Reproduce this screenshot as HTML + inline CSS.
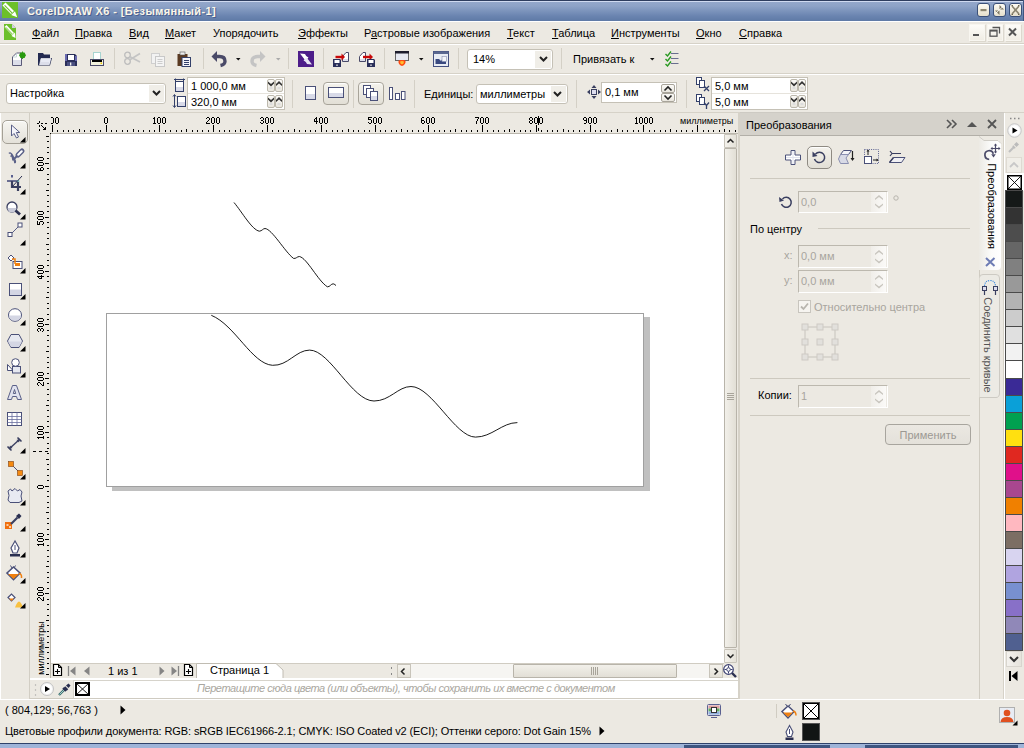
<!DOCTYPE html>
<html><head><meta charset="utf-8">
<style>
*{margin:0;padding:0;box-sizing:border-box}
html,body{width:1024px;height:748px;overflow:hidden;background:#ECE9E2;font-family:"Liberation Sans",sans-serif;font-size:11px;color:#000;position:relative}
.a{position:absolute}
.t{position:absolute;white-space:nowrap;line-height:13px}
svg{position:absolute;overflow:visible}
.u{text-decoration:underline;text-underline-offset:1px}
</style></head><body>
<div class="a" style="left:0px;top:0px;width:1024px;height:22px;background:linear-gradient(#95a8cb,#8ea3c7 25%,#6a84b0 75%,#5f7aa6);border-top:1px solid #2e3d5e;border-bottom:1px solid #3f5580"></div>
<div class="a" style="left:0px;top:1px;width:1024px;height:1px;background:#d0daf0"></div>
<div class="a" style="left:0px;top:21px;width:1024px;height:1px;background:#fff"></div>
<div class="a" style="left:1023px;top:0px;width:1px;height:21px;background:#3f5580"></div>
<svg style="left:2px;top:2px;" width="16" height="16" viewBox="0 0 16 16"><rect x="0" y="0" width="16" height="16" fill="#6cc02a"/><path d="M0.5 3.5 L3.5 0.5 L12 9 L9 12 Z" fill="#fff"/><path d="M2.6 3.4 L10 10.8" stroke="#6cc02a" stroke-width="1.1"/><path d="M9.2 13 L13 9.2 L15.2 15.2 Z" fill="#fff"/></svg>
<div class="t" style="left:27px;top:4.5px;font-weight:bold;font-size:11px;color:#fbf6e8;letter-spacing:0.38px;text-shadow:1px 1px 0 #4a6090">CorelDRAW X6 - [Безымянный-1]</div>
<div class="a" style="left:977px;top:3px;width:13px;height:14px;background:linear-gradient(#fdfbf3,#e6e0cc);border:1px solid #3b5078;border-radius:3px"></div>
<div class="a" style="left:993px;top:3px;width:13px;height:14px;background:linear-gradient(#fdfbf3,#e6e0cc);border:1px solid #3b5078;border-radius:3px"></div>
<div class="a" style="left:1009px;top:3px;width:13px;height:14px;background:linear-gradient(#fdfbf3,#e6e0cc);border:1px solid #3b5078;border-radius:3px"></div>
<svg style="left:977px;top:3px;" width="13" height="14" viewBox="0 0 13 14"><rect x="3.5" y="6" width="6" height="2.2" fill="#8c8670"/></svg>
<svg style="left:993px;top:3px;" width="13" height="14" viewBox="0 0 13 14"><path d="M6.5 2 L11 6.5 H6.5 Z" fill="#7c7660"/><path d="M6.5 12 L2 7.5 H6.5 Z" fill="#7c7660"/><path d="M2.5 10.5 L10.5 3" stroke="#fff" stroke-width="0.9"/></svg>
<svg style="left:1009px;top:3px;" width="13" height="14" viewBox="0 0 13 14"><path d="M3 3 L10 11 M10 3 L3 11" stroke="#8a8470" stroke-width="1.6"/><circle cx="6.5" cy="7" r="1.3" fill="#8a8470"/><path d="M2.5 2.5 h1.5 M9 2.5 h1.5 M2.5 11.5 h1.5 M9 11.5 h1.5" stroke="#6c6650" stroke-width="1.2"/></svg>
<div class="a" style="left:0px;top:22px;width:1024px;height:21px;background:#ECE9E2"></div>
<div class="a" style="left:0px;top:43px;width:1024px;height:1px;background:#d6d2c8"></div>
<div class="a" style="left:0px;top:44px;width:1024px;height:1px;background:#fff"></div>
<svg style="left:4px;top:24px;" width="12" height="16" viewBox="0 0 12 16"><path d="M0 0 H8 L12 4 V16 H0 Z" fill="#6cc02a"/><path d="M8 0 L12 4 H8 Z" fill="#d4cce4"/><path d="M0.5 3 L2.5 1 L10 9 L8 11 Z" fill="#fff"/><path d="M1.8 3.3 L8.3 10" stroke="#6cc02a" stroke-width="1"/><path d="M7.5 12 L11 8.5 L11.5 14 Z" fill="#fff"/></svg>
<div class="t" style="left:32px;top:27px;"><span class="u">Ф</span>айл</div>
<div class="t" style="left:75px;top:27px;"><span class="u">П</span>равка</div>
<div class="t" style="left:129px;top:27px;"><span class="u">В</span>ид</div>
<div class="t" style="left:165px;top:27px;"><span class="u">М</span>акет</div>
<div class="t" style="left:213px;top:27px;">Упорядочить</div>
<div class="t" style="left:298px;top:27px;"><span class="u">Э</span>ффекты</div>
<div class="t" style="left:364px;top:27px;">Р<span class="u">а</span>стровые изображения</div>
<div class="t" style="left:507px;top:27px;"><span class="u">Т</span>екст</div>
<div class="t" style="left:552px;top:27px;"><span class="u">Т</span>аблица</div>
<div class="t" style="left:611px;top:27px;"><span class="u">И</span>нструменты</div>
<div class="t" style="left:696px;top:27px;"><span class="u">О</span>кно</div>
<div class="t" style="left:739px;top:27px;"><span class="u">С</span>правка</div>
<div class="a" style="left:969px;top:24px;width:16px;height:17px;background:linear-gradient(#fdfcf8,#f0ede4);border:1px solid #f8f6f0;box-shadow:1px 1px 0 #dcd8ce"></div>
<div class="a" style="left:987px;top:24px;width:16px;height:17px;background:linear-gradient(#fdfcf8,#f0ede4);border:1px solid #f8f6f0;box-shadow:1px 1px 0 #dcd8ce"></div>
<div class="a" style="left:1005px;top:24px;width:16px;height:17px;background:linear-gradient(#fdfcf8,#f0ede4);border:1px solid #f8f6f0;box-shadow:1px 1px 0 #dcd8ce"></div>
<svg style="left:969px;top:24px;" width="16" height="17" viewBox="0 0 16 17"><rect x="4" y="10" width="6" height="2" fill="#555"/></svg>
<svg style="left:987px;top:24px;" width="16" height="17" viewBox="0 0 16 17"><path d="M5.5 3.5 H12.5 V9.5" stroke="#555" fill="none" stroke-width="1.3"/><rect x="3" y="6.2" width="7" height="6" stroke="#555" fill="none" stroke-width="1.3"/><rect x="3" y="6" width="7" height="1.6" fill="#555"/></svg>
<svg style="left:1005px;top:24px;" width="16" height="17" viewBox="0 0 16 17"><path d="M4 4.5 L11 11.5 M11 4.5 L4 11.5" stroke="#555" stroke-width="2"/></svg>
<div class="a" style="left:0px;top:73px;width:1024px;height:1px;background:#d6d2c8"></div>
<div class="a" style="left:0px;top:74px;width:1024px;height:1px;background:#fff"></div>
<div class="a" style="left:114px;top:48px;width:1px;height:21px;background:#d4d0c6"></div>
<div class="a" style="left:203px;top:48px;width:1px;height:21px;background:#d4d0c6"></div>
<div class="a" style="left:288px;top:48px;width:1px;height:21px;background:#d4d0c6"></div>
<div class="a" style="left:323px;top:48px;width:1px;height:21px;background:#d4d0c6"></div>
<div class="a" style="left:384px;top:48px;width:1px;height:21px;background:#d4d0c6"></div>
<div class="a" style="left:458px;top:48px;width:1px;height:21px;background:#d4d0c6"></div>
<div class="a" style="left:561px;top:48px;width:1px;height:21px;background:#d4d0c6"></div>
<svg style="left:12px;top:52px;" width="14" height="14" viewBox="0 0 14 14"><path d="M0.5 13.5 V5 L4.5 1 H9.5 V13.5 Z" fill="#fff" stroke="#5a5a78"/><rect x="1" y="8" width="8" height="5" fill="#dcdeea"/><path d="M1 5 H4.5 V1.5" fill="none" stroke="#c8dcdc"/><circle cx="10.5" cy="3.2" r="3" fill="#2a9a10"/><path d="M10.5 -0.5 V7 M7 3.2 H14 M8 0.8 L13 5.6 M13 0.8 L8 5.6" stroke="#2a9a10" stroke-width="0.9"/></svg>
<svg style="left:38px;top:53px;" width="14" height="13" viewBox="0 0 14 13"><path d="M0 0 H5 L6 1.5 H12 V9 H0 Z" fill="#232a50"/><path d="M0 12.5 V4 H12 V5 H14 L12 12.5 Z" fill="#232a50"/><path d="M1.5 12 L3 5.5 H13.2 L11.5 12 Z" fill="#e8eaf4"/><path d="M1.5 12 L3 5.5 H13" fill="none" stroke="#fff" stroke-width="0.6"/><rect x="2" y="9" width="9" height="3" fill="#dcdeea"/></svg>
<svg style="left:65px;top:54px;" width="12" height="12" viewBox="0 0 12 12"><path d="M0 0 H10 L12 2 V12 H0 Z" fill="#2a2f5a"/><rect x="0" y="0" width="2" height="7" fill="#6a6ab0"/><rect x="10" y="2" width="2" height="5" fill="#6a6ab0"/><rect x="3" y="1" width="6" height="5" fill="#fff"/><rect x="2" y="8" width="8" height="4" fill="#4a4f80"/><rect x="5" y="8.5" width="1.3" height="3" fill="#f0f0f0"/></svg>
<svg style="left:90px;top:52px;" width="14" height="14" viewBox="0 0 14 14"><rect x="3.5" y="0.5" width="7" height="8" fill="#fff" stroke="#a8d4d0"/><rect x="0.5" y="7.5" width="13" height="6" fill="#f2f2dc" stroke="#4a4a68"/><rect x="2" y="8" width="10" height="2" fill="#000"/><rect x="10.5" y="10.5" width="1.5" height="1.5" fill="#f0c800"/></svg>
<svg style="left:124px;top:51px;" width="17" height="14" viewBox="0 0 17 14"><circle cx="3.5" cy="4" r="2.8" fill="none" stroke="#bdbdbd" stroke-width="1.3"/><circle cx="3.5" cy="10.5" r="2.8" fill="none" stroke="#bdbdbd" stroke-width="1.3"/><path d="M5.5 5.5 L16 11 M5.5 9 L16 2.5" stroke="#c4c4c4" stroke-width="1.6"/></svg>
<svg style="left:151px;top:53px;" width="14" height="14" viewBox="0 0 14 14"><rect x="0.5" y="0.5" width="8" height="10" fill="#f2f2f2" stroke="#cfcfcf"/><rect x="4.5" y="3.5" width="9" height="10" fill="#f4f4f4" stroke="#c8c8c8"/><path d="M6.5 6.5 H11.5 M6.5 8.5 H11.5 M6.5 10.5 H11.5" stroke="#ccc"/></svg>
<svg style="left:177px;top:52px;" width="14" height="15" viewBox="0 0 14 15"><rect x="0.5" y="2" width="10" height="12" fill="#5a3a22"/><rect x="3" y="0" width="5" height="3" fill="#eee" stroke="#555" stroke-width="0.6"/><rect x="5" y="5.5" width="8.5" height="9" fill="#f4f4fa" stroke="#33406a"/><path d="M7 8.5 H12 M7 10.5 H12 M7 12.5 H12" stroke="#33406a"/></svg>
<svg style="left:211px;top:50px;" width="17" height="17" viewBox="0 0 17 17"><path d="M5 6.5 H8.5 Q14 6.5 14 11.2 Q14 14.5 9.5 15.5" fill="none" stroke="#4a4a68" stroke-width="3.4"/><path d="M0.5 6.5 L6 1 V12 Z" fill="#4a4a68"/></svg>
<svg style="left:236px;top:58px;" width="5" height="3" viewBox="0 0 5 3"><path d="M0 0 H4.5 L2.25 2.5 Z" fill="#111"/></svg>
<svg style="left:249px;top:50px;" width="17" height="17" viewBox="0 0 17 17"><path d="M12 6.5 H8.5 Q3 6.5 3 11.2 Q3 14.5 7.5 15.5" fill="none" stroke="#c4c4c4" stroke-width="3.4"/><path d="M16.5 6.5 L11 1 V12 Z" fill="#c4c4c4"/></svg>
<svg style="left:276px;top:58px;" width="5" height="3" viewBox="0 0 5 3"><path d="M0 0 H4.5 L2.25 2.5 Z" fill="#aaa"/></svg>
<svg style="left:298px;top:51px;" width="16" height="16" viewBox="0 0 16 16"><rect x="0" y="0" width="16" height="16" fill="#4d1d8a"/><path d="M2 2.5 L7 3 L9.5 7.5 L7 9 Z" fill="#fff"/><path d="M4 2.8 Q8 6 7.5 9.5 L10.5 6.5 Z" fill="#fff"/><path d="M14 13.5 L9 13 L6.5 8.5 L9 7 Z" fill="#e8e4f4"/><path d="M12 13.2 Q8 10 8.5 6.5 L5.5 9.5 Z" fill="#e8e4f4"/></svg>
<svg style="left:332px;top:51px;" width="17" height="17" viewBox="0 0 17 17"><path d="M10.5 5.5 L14 1.5 H16.5 V10.5 H10.5 Z" fill="#fff" stroke="#4a4a68"/><rect x="11" y="8" width="5" height="2" fill="#dcdeea"/><path d="M3.5 6 H10" stroke="#c80808" stroke-width="2.4"/><path d="M9.5 2.5 L13 6 L9.5 9.5 Z" fill="#c80808"/><path d="M1 8 H8 L9 9 V16 H1 Z" fill="#2a2f5a"/><rect x="2.5" y="9" width="5" height="3" fill="#fff"/><rect x="4.3" y="13.5" width="1.4" height="1.4" fill="#eee"/></svg>
<svg style="left:359px;top:51px;" width="17" height="17" viewBox="0 0 17 17"><path d="M0.5 5.5 L4 1.5 H6.5 V10.5 H0.5 Z" fill="#fff" stroke="#4a4a68"/><rect x="1" y="8" width="5" height="2" fill="#dcdeea"/><path d="M4 6 H11" stroke="#c80808" stroke-width="2.4"/><path d="M10.5 2.5 L14 6 L10.5 9.5 Z" fill="#c80808"/><path d="M8 8 H15 L16 9 V16 H8 Z" fill="#2a2f5a"/><rect x="9.5" y="9" width="5" height="3" fill="#fff"/><rect x="11.3" y="13.5" width="1.4" height="1.4" fill="#eee"/></svg>
<svg style="left:395px;top:51px;" width="14" height="17" viewBox="0 0 14 17"><rect x="0.5" y="0.5" width="13" height="9" fill="#e6e8f0" stroke="#666"/><rect x="0" y="0" width="14" height="2.5" fill="#1c1c2c"/><path d="M3.5 10 Q4 8.5 7 9 Q10 8.5 10.5 10 Q11 13.5 7 15 Q3 13.5 3.5 10 Z" fill="#ff4a10"/><path d="M5 10.5 Q7 9.5 9 10.5 Q9 12.8 7 13.5 Q5 12.8 5 10.5 Z" fill="#ffc030"/></svg>
<svg style="left:419px;top:58px;" width="5" height="3" viewBox="0 0 5 3"><path d="M0 0 H4.5 L2.25 2.5 Z" fill="#111"/></svg>
<svg style="left:433px;top:51px;" width="16" height="16" viewBox="0 0 16 16"><rect x="0.5" y="0.5" width="15" height="15" fill="#e8ecf4" stroke="#445080"/><rect x="0.5" y="0.5" width="15" height="2.5" fill="#5a6890"/><path d="M2.5 13 V8 H6 L8 10 L10.5 6 H13 V13 Z" fill="#3a4a80"/><rect x="9" y="5.5" width="4.5" height="5" fill="#f4f6fa" stroke="#8890b0" stroke-width="0.6"/></svg>
<div class="a" style="left:467px;top:49px;width:86px;height:21px;background:#fff;border:1px solid #c5c1b6;border-radius:3px"></div>
<div class="t" style="left:473px;top:53px;">14%</div>
<div class="a" style="left:535px;top:51px;width:16px;height:17px;background:#f0eee8"></div>
<svg style="left:539px;top:56px;" width="9" height="6" viewBox="0 0 9 6"><path d="M1 1 L4.5 4.5 L8 1" fill="none" stroke="#222" stroke-width="2"/></svg>
<div class="t" style="left:573px;top:53px;">Привязать к</div>
<svg style="left:650px;top:58px;" width="5" height="3" viewBox="0 0 5 3"><path d="M0 0 H4.5 L2.25 2.5 Z" fill="#111"/></svg>
<svg style="left:665px;top:51px;" width="14" height="16" viewBox="0 0 14 16"><path d="M6 2.5 H13.5 M6 7.5 H13.5 M6 12.5 H13.5" stroke="#6a6e90" stroke-width="1.2"/><path d="M0.5 3 L2.5 5 L6 0.5 M0.5 8 L2.5 10 L6 5.5 M0.5 13 L2.5 15 L6 10.5" fill="none" stroke="#2a9a22" stroke-width="1.4"/></svg>
<div class="a" style="left:0px;top:112px;width:1024px;height:1px;background:#d6d2c8"></div>
<div class="a" style="left:6px;top:83px;width:160px;height:21px;background:#fff;border:1px solid #c5c1b6;border-radius:3px"></div>
<div class="t" style="left:10px;top:87px;">Настройка</div>
<div class="a" style="left:149px;top:85px;width:15px;height:17px;background:#f0eee8"></div>
<svg style="left:152px;top:90px;" width="9" height="6" viewBox="0 0 9 6"><path d="M1 1 L4.5 4.5 L8 1" fill="none" stroke="#222" stroke-width="2"/></svg>
<svg style="left:173px;top:78px;" width="13" height="15" viewBox="0 0 13 15"><path d="M2.5 0.5 V3 M10.5 0.5 V3 M1 1.5 H12" stroke="#33406a"/><rect x="2.5" y="3.5" width="8" height="10" fill="#fff" stroke="#33406a"/><rect x="3" y="9" width="7" height="4" fill="#d8dae8"/></svg>
<svg style="left:173px;top:94px;" width="13" height="15" viewBox="0 0 13 15"><path d="M1.5 1 V13 M0 2.5 L1.5 0.5 L3 2.5 M0 11.5 L1.5 13.5 L3 11.5" stroke="#33406a" fill="none"/><rect x="4.5" y="2.5" width="8" height="10" fill="#fff" stroke="#33406a"/><rect x="5" y="8" width="7" height="4" fill="#d8dae8"/></svg>
<div class="a" style="left:187px;top:77px;width:98px;height:33px;background:#fff;border:1px solid #c5c1b6"></div>
<div class="a" style="left:188px;top:93px;width:96px;height:1px;background:#e6e3dc"></div>
<div class="t" style="left:191px;top:80px;">1 000,0 мм</div>
<div class="a" style="left:267px;top:79px;width:8px;height:13px;background:linear-gradient(#fbfaf7,#e9e6de);border:1px solid #bcb8ac;border-radius:2px"></div>
<svg style="left:268px;top:81px;" width="6" height="8" viewBox="0 0 6 8"><path d="M0 0.5 L3 3 L6 0.5 V2.5 L3 5.5 L0 2.5 Z" fill="#333"/><rect x="1.5" y="6" width="3" height="2" fill="#ddd"/></svg>
<div class="a" style="left:275px;top:79px;width:8px;height:13px;background:linear-gradient(#fbfaf7,#e9e6de);border:1px solid #bcb8ac;border-radius:2px"></div>
<svg style="left:276px;top:81px;" width="6" height="8" viewBox="0 0 6 8"><path d="M0 5 L3 2.5 L6 5 V3 L3 0 L0 3 Z" fill="#333"/><rect x="1.5" y="6" width="3" height="2" fill="#ddd"/></svg>
<div class="t" style="left:191px;top:96px;">320,0 мм</div>
<div class="a" style="left:267px;top:95px;width:8px;height:13px;background:linear-gradient(#fbfaf7,#e9e6de);border:1px solid #bcb8ac;border-radius:2px"></div>
<svg style="left:268px;top:97px;" width="6" height="8" viewBox="0 0 6 8"><path d="M0 0.5 L3 3 L6 0.5 V2.5 L3 5.5 L0 2.5 Z" fill="#333"/><rect x="1.5" y="6" width="3" height="2" fill="#ddd"/></svg>
<div class="a" style="left:275px;top:95px;width:8px;height:13px;background:linear-gradient(#fbfaf7,#e9e6de);border:1px solid #bcb8ac;border-radius:2px"></div>
<svg style="left:276px;top:97px;" width="6" height="8" viewBox="0 0 6 8"><path d="M0 5 L3 2.5 L6 5 V3 L3 0 L0 3 Z" fill="#333"/><rect x="1.5" y="6" width="3" height="2" fill="#ddd"/></svg>
<div class="a" style="left:292px;top:80px;width:1px;height:28px;background:#d4d0c6"></div>
<svg style="left:305px;top:86px;" width="11" height="14" viewBox="0 0 11 14"><rect x="0.5" y="0.5" width="10" height="13" fill="#fff" stroke="#4a5078"/><rect x="1" y="8" width="9" height="5" fill="#d8dae8"/></svg>
<div class="a" style="left:323px;top:82px;width:26px;height:23px;background:linear-gradient(#f4f2ec,#e2dfd6);border:1px solid #a8a49a;border-radius:4px;box-shadow:inset 0 1px 1px #fff"></div>
<svg style="left:328px;top:86px;" width="17" height="14" viewBox="0 0 17 14"><rect x="0.5" y="1.5" width="15" height="10" fill="#fff" stroke="#4a5078"/><rect x="1" y="7" width="14" height="4" fill="#d8dae8"/></svg>
<div class="a" style="left:353px;top:80px;width:1px;height:28px;background:#d4d0c6"></div>
<div class="a" style="left:358px;top:82px;width:26px;height:23px;background:linear-gradient(#f4f2ec,#e2dfd6);border:1px solid #a8a49a;border-radius:4px;box-shadow:inset 0 1px 1px #fff"></div>
<svg style="left:363px;top:85px;" width="16" height="16" viewBox="0 0 16 16"><rect x="0.5" y="0.5" width="7" height="9" fill="#fff" stroke="#4a5078"/><rect x="3.5" y="3.5" width="7" height="9" fill="#fff" stroke="#4a5078"/><rect x="7.5" y="6.5" width="7" height="9" fill="#fff" stroke="#4a5078"/><rect x="8" y="11" width="6" height="4" fill="#d8dae8"/></svg>
<svg style="left:389px;top:87px;" width="17" height="13" viewBox="0 0 17 13"><rect x="0.5" y="0.5" width="3" height="12" fill="#fff" stroke="#4a5078"/><rect x="6.5" y="6.5" width="4" height="6" fill="#fff" stroke="#4a5078"/><rect x="12.5" y="4.5" width="3.5" height="8" fill="#fff" stroke="#4a5078"/></svg>
<div class="a" style="left:414px;top:80px;width:1px;height:28px;background:#d4d0c6"></div>
<div class="t" style="left:424px;top:88px;">Единицы:</div>
<div class="a" style="left:476px;top:84px;width:92px;height:20px;background:#fff;border:1px solid #c5c1b6;border-radius:3px"></div>
<div class="t" style="left:480px;top:88px;">миллиметры</div>
<div class="a" style="left:551px;top:86px;width:15px;height:16px;background:#f0eee8"></div>
<svg style="left:553px;top:91px;" width="9" height="6" viewBox="0 0 9 6"><path d="M1 1 L4.5 4.5 L8 1" fill="none" stroke="#222" stroke-width="2"/></svg>
<div class="a" style="left:576px;top:80px;width:1px;height:28px;background:#d4d0c6"></div>
<svg style="left:587px;top:85px;" width="14" height="14" viewBox="0 0 14 14"><path d="M7 0 L9.5 3 H4.5 Z M7 14 L9.5 11 H4.5 Z M0 7 L3 4.5 V9.5 Z M14 7 L11 4.5 V9.5 Z" fill="#3a4060"/><rect x="4.5" y="4.5" width="5" height="5" fill="#dde" stroke="#3a4060"/></svg>
<div class="a" style="left:601px;top:82px;width:76px;height:21px;background:#fff;border:1px solid #c5c1b6"></div>
<div class="t" style="left:605px;top:86px;">0,1 мм</div>
<div class="a" style="left:661px;top:84px;width:14px;height:9px;background:linear-gradient(#fbfaf7,#e9e6de);border:1px solid #a8a49a;border-radius:2px"></div>
<div class="a" style="left:661px;top:93px;width:14px;height:9px;background:linear-gradient(#fbfaf7,#e9e6de);border:1px solid #a8a49a;border-radius:2px"></div>
<svg style="left:664px;top:86px;" width="8" height="5" viewBox="0 0 8 5"><path d="M0.5 4.5 L4 1 L7.5 4.5" fill="none" stroke="#222" stroke-width="1.6"/></svg>
<svg style="left:664px;top:95px;" width="8" height="5" viewBox="0 0 8 5"><path d="M0.5 0.5 L4 4 L7.5 0.5" fill="none" stroke="#222" stroke-width="1.6"/></svg>
<div class="a" style="left:686px;top:80px;width:1px;height:28px;background:#d4d0c6"></div>
<svg style="left:696px;top:77px;" width="14" height="15" viewBox="0 0 14 15"><rect x="0.5" y="0.5" width="5" height="7" fill="#fff" stroke="#33406a"/><rect x="3.5" y="3.5" width="5" height="7" fill="#fff" stroke="#33406a"/><path d="M8 9 L13 14 M13 9 L8 14" stroke="#33406a" stroke-width="1.3"/></svg>
<svg style="left:696px;top:94px;" width="14" height="15" viewBox="0 0 14 15"><rect x="0.5" y="0.5" width="5" height="7" fill="#fff" stroke="#33406a"/><rect x="3.5" y="3.5" width="5" height="7" fill="#fff" stroke="#33406a"/><path d="M8 8.5 L10.5 11.5 L13 8.5 M10.5 11.5 V15" fill="none" stroke="#33406a" stroke-width="1.3"/></svg>
<div class="a" style="left:711px;top:77px;width:97px;height:33px;background:#fff;border:1px solid #c5c1b6"></div>
<div class="a" style="left:712px;top:93px;width:95px;height:1px;background:#e6e3dc"></div>
<div class="t" style="left:715px;top:80px;">5,0 мм</div>
<div class="a" style="left:790px;top:79px;width:8px;height:13px;background:linear-gradient(#fbfaf7,#e9e6de);border:1px solid #bcb8ac;border-radius:2px"></div>
<svg style="left:791px;top:81px;" width="6" height="8" viewBox="0 0 6 8"><path d="M0 0.5 L3 3 L6 0.5 V2.5 L3 5.5 L0 2.5 Z" fill="#333"/><rect x="1.5" y="6" width="3" height="2" fill="#ddd"/></svg>
<div class="a" style="left:798px;top:79px;width:8px;height:13px;background:linear-gradient(#fbfaf7,#e9e6de);border:1px solid #bcb8ac;border-radius:2px"></div>
<svg style="left:799px;top:81px;" width="6" height="8" viewBox="0 0 6 8"><path d="M0 5 L3 2.5 L6 5 V3 L3 0 L0 3 Z" fill="#333"/><rect x="1.5" y="6" width="3" height="2" fill="#ddd"/></svg>
<div class="t" style="left:715px;top:96px;">5,0 мм</div>
<div class="a" style="left:790px;top:95px;width:8px;height:13px;background:linear-gradient(#fbfaf7,#e9e6de);border:1px solid #bcb8ac;border-radius:2px"></div>
<svg style="left:791px;top:97px;" width="6" height="8" viewBox="0 0 6 8"><path d="M0 0.5 L3 3 L6 0.5 V2.5 L3 5.5 L0 2.5 Z" fill="#333"/><rect x="1.5" y="6" width="3" height="2" fill="#ddd"/></svg>
<div class="a" style="left:798px;top:95px;width:8px;height:13px;background:linear-gradient(#fbfaf7,#e9e6de);border:1px solid #bcb8ac;border-radius:2px"></div>
<svg style="left:799px;top:97px;" width="6" height="8" viewBox="0 0 6 8"><path d="M0 5 L3 2.5 L6 5 V3 L3 0 L0 3 Z" fill="#333"/><rect x="1.5" y="6" width="3" height="2" fill="#ddd"/></svg>
<div class="a" style="left:0px;top:113px;width:1px;height:586px;background:#fff"></div>
<div class="a" style="left:29px;top:113px;width:1px;height:586px;background:#d2cec4"></div>
<div class="a" style="left:2px;top:120px;width:26px;height:24px;background:linear-gradient(#f6f5f1,#e4e1d9);border:1px solid #a4a096;border-radius:5px;box-shadow:inset 0 1px 1px #fff"></div>
<svg style="left:10px;top:124px;" width="11" height="15" viewBox="0 0 11 15"><path d="M1.5 1 V12 L4 9.5 L6.5 14 L8.5 13 L6.3 8.5 H9.8 Z" fill="#f4f4fa" stroke="#5a6088" stroke-width="1"/></svg>
<svg style="left:20px;top:137px;" width="6" height="6" viewBox="0 0 6 6"><path d="M5.5 0 V5.5 H0 Z" fill="#000"/></svg>
<svg style="left:7px;top:149px;" width="17" height="17" viewBox="0 0 17 17"><path d="M11 6 L15 2" stroke="#5a6088" stroke-width="5" stroke-linecap="round"/><path d="M11.3 5.7 L14.7 2.3" stroke="#fff" stroke-width="2.2" stroke-linecap="round"/><path d="M10 7 L7 10" stroke="#5a6088" stroke-width="2"/><path d="M2 4.5 Q3 3 4.5 5 L6.5 8 M3.5 7.5 Q4.5 6 6 8 L8 11 Q9 13 7.5 14 M5.5 10.5 Q7 9.5 8 11" fill="none" stroke="#5a6088" stroke-width="1.4"/><path d="M4.5 5 L6 11.5 M6 8 L8 14" fill="none" stroke="#5a6088" stroke-width="1.2"/></svg>
<svg style="left:20px;top:163px;" width="6" height="6" viewBox="0 0 6 6"><path d="M5.5 0 V5.5 H0 Z" fill="#000"/></svg>
<svg style="left:7px;top:175px;" width="16" height="16" viewBox="0 0 16 16"><path d="M5 0 V2.5" stroke="#5a6090" stroke-width="2"/><path d="M0 6 H10" stroke="#6a6e92" stroke-width="2"/><path d="M5 6 V12 H14" fill="none" stroke="#3a3f60" stroke-width="2.2"/><path d="M11 6 V16" stroke="#3a3f60" stroke-width="2.2"/><path d="M11 5 V7" stroke="#7ac0c0" stroke-width="2.2"/><path d="M5 12 L15 1" stroke="#2a2f50" stroke-width="1"/></svg>
<svg style="left:20px;top:189px;" width="6" height="6" viewBox="0 0 6 6"><path d="M5.5 0 V5.5 H0 Z" fill="#000"/></svg>
<svg style="left:6px;top:201px;" width="17" height="14" viewBox="0 0 17 14"><circle cx="6" cy="6" r="5" fill="#fff" stroke="#3a3f60" stroke-width="1.3"/><path d="M1.5 7 H10.5 A4.5 4.5 0 0 1 1.5 7 Z" fill="#c8cad8"/><path d="M9.5 9.5 L14 13.5" stroke="#2a2f50" stroke-width="2.8"/></svg>
<svg style="left:20px;top:214px;" width="6" height="6" viewBox="0 0 6 6"><path d="M5.5 0 V5.5 H0 Z" fill="#000"/></svg>
<svg style="left:7px;top:222px;" width="16" height="16" viewBox="0 0 16 16"><path d="M3.5 12.5 L12.5 3.5" stroke="#5a6088" stroke-width="1"/><rect x="1" y="10.5" width="4" height="4" fill="#fff" stroke="#4a5078"/><rect x="11" y="1" width="4" height="4" fill="#fff" stroke="#4a5078"/></svg>
<svg style="left:20px;top:240px;" width="6" height="6" viewBox="0 0 6 6"><path d="M5.5 0 V5.5 H0 Z" fill="#000"/></svg>
<svg style="left:7px;top:254px;" width="16" height="16" viewBox="0 0 16 16"><path d="M4 1 L7 4 L4 7 L1 4 Z" fill="#fff" stroke="#4a5078"/><rect x="6" y="7.5" width="9" height="7" fill="#fff" stroke="#4a5078"/><rect x="8" y="9" width="5" height="3" fill="#f08010"/><path d="M5 5 H8 V10" stroke="#f08010" stroke-width="1.5" fill="none"/></svg>
<svg style="left:20px;top:268px;" width="6" height="6" viewBox="0 0 6 6"><path d="M5.5 0 V5.5 H0 Z" fill="#000"/></svg>
<svg style="left:9px;top:283px;" width="13" height="13" viewBox="0 0 13 13"><rect x="0.5" y="0.5" width="12" height="12" fill="#fff" stroke="#4a5078"/><rect x="1" y="6.5" width="11" height="5.5" fill="#d4d6e4"/></svg>
<svg style="left:20px;top:294px;" width="6" height="6" viewBox="0 0 6 6"><path d="M5.5 0 V5.5 H0 Z" fill="#000"/></svg>
<svg style="left:8px;top:308px;" width="15" height="14" viewBox="0 0 15 14"><ellipse cx="7" cy="7" rx="6.5" ry="6.3" fill="#fff" stroke="#4a5078"/><path d="M0.8 7.5 H13.2 A6.3 6.2 0 0 1 0.8 7.5 Z" fill="#d4d6e4"/></svg>
<svg style="left:20px;top:320px;" width="6" height="6" viewBox="0 0 6 6"><path d="M5.5 0 V5.5 H0 Z" fill="#000"/></svg>
<svg style="left:7px;top:334px;" width="16" height="14" viewBox="0 0 16 14"><path d="M4 0.5 H12 L15.5 7 L12 13.5 H4 L0.5 7 Z" fill="#e6e8f0" stroke="#4a5078"/><path d="M1 7.5 H15 L12 13 H4 Z" fill="#d4d6e4"/></svg>
<svg style="left:20px;top:346px;" width="6" height="6" viewBox="0 0 6 6"><path d="M5.5 0 V5.5 H0 Z" fill="#000"/></svg>
<svg style="left:7px;top:358px;" width="16" height="16" viewBox="0 0 16 16"><path d="M0.5 6.5 L6 12.5 H0.5 Z" fill="#fff" stroke="#4a5078"/><rect x="5.5" y="8.5" width="8" height="6.5" fill="#e6e8f0" stroke="#4a5078"/><circle cx="8.5" cy="4.5" r="3.8" fill="#fff" stroke="#4a5078"/></svg>
<svg style="left:20px;top:372px;" width="6" height="6" viewBox="0 0 6 6"><path d="M5.5 0 V5.5 H0 Z" fill="#000"/></svg>
<svg style="left:7px;top:385px;" width="15" height="15" viewBox="0 0 15 15"><path d="M0.5 14.5 L5.5 0.5 H9.5 L14.5 14.5 H10.5 L9.5 11.5 H5.5 L4.5 14.5 Z M6.3 8.5 H8.7 L7.5 4.5 Z" fill="#e0e2ee" stroke="#5a6088" stroke-width="1"/></svg>
<svg style="left:7px;top:412px;" width="15" height="14" viewBox="0 0 15 14"><rect x="0.5" y="0.5" width="14" height="13" fill="#fff" stroke="#4a5078"/><path d="M0.5 4.5 H14.5 M0.5 7.5 H14.5 M0.5 10.5 H14.5 M5 0.5 V13.5 M10 0.5 V13.5" stroke="#6a70a0" stroke-width="0.8"/></svg>
<svg style="left:7px;top:437px;" width="15" height="14" viewBox="0 0 15 14"><path d="M2 12 L13 2" stroke="#3a3f60" stroke-width="1.4"/><path d="M0.5 9.5 L4.5 13.5 M10.5 0.5 L14.5 4.5" stroke="#3a3f60" stroke-width="1.6"/><path d="M2 12 L3 8.5 L5.5 11 Z M13 2 L9.5 3 L12 5.5 Z" fill="#3a3f60"/></svg>
<svg style="left:20px;top:448px;" width="6" height="6" viewBox="0 0 6 6"><path d="M5.5 0 V5.5 H0 Z" fill="#000"/></svg>
<svg style="left:8px;top:461px;" width="15" height="16" viewBox="0 0 15 16"><path d="M3 3 L12 12" stroke="#4a5078" stroke-width="1"/><rect x="0.5" y="0.5" width="5" height="5" fill="#f58a10" stroke="#804010" stroke-width="0.6"/><rect x="9.5" y="9.5" width="5" height="5" fill="#f58a10" stroke="#804010" stroke-width="0.6"/></svg>
<svg style="left:20px;top:474px;" width="6" height="6" viewBox="0 0 6 6"><path d="M5.5 0 V5.5 H0 Z" fill="#000"/></svg>
<svg style="left:7px;top:488px;" width="16" height="15" viewBox="0 0 16 15"><path d="M1 3 L3.5 1 L5 3 L8 0.5 L10.5 3 L13 1.5 L15 4 L14 8 L15 13 L12 14.5 H3 L1 12 L2 7.5 Z" fill="#e8eaf2" stroke="#4a5078" stroke-width="1"/></svg>
<svg style="left:20px;top:500px;" width="6" height="6" viewBox="0 0 6 6"><path d="M5.5 0 V5.5 H0 Z" fill="#000"/></svg>
<svg style="left:5px;top:513px;" width="17" height="17" viewBox="0 0 17 17"><rect x="0" y="9" width="7" height="7" fill="#f07010"/><rect x="1.5" y="11" width="2" height="2" fill="#ffd0a0"/><rect x="4" y="13" width="2" height="2" fill="#ffd0a0"/><path d="M6 11 L12.5 4.5" stroke="#3a3f60" stroke-width="2.2"/><path d="M11 3 L14 0.5 L16.5 3 L14 6 Z" fill="#2a2f50"/></svg>
<svg style="left:20px;top:526px;" width="6" height="6" viewBox="0 0 6 6"><path d="M5.5 0 V5.5 H0 Z" fill="#000"/></svg>
<svg style="left:9px;top:540px;" width="12" height="17" viewBox="0 0 12 17"><path d="M6 1 L2 8 L4 13 H8 L10 8 Z" fill="#fff" stroke="#4a5078" stroke-width="1.2"/><path d="M6 5 V10" stroke="#4a5078"/><rect x="1" y="14" width="10" height="2.5" fill="#2a2f50"/></svg>
<svg style="left:20px;top:552px;" width="6" height="6" viewBox="0 0 6 6"><path d="M5.5 0 V5.5 H0 Z" fill="#000"/></svg>
<svg style="left:6px;top:565px;" width="17" height="17" viewBox="0 0 17 17"><path d="M1 8 L7.5 2 L14 8 L7.5 14.5 Z" fill="#fff" stroke="#4a5078" stroke-width="1.6"/><path d="M2 9 H13 L7.5 14 Z" fill="#f08010"/><path d="M6 3 L4.5 0.5 M8 3 L9.5 0.5" stroke="#4a5078"/><path d="M13 8.5 Q16 9 15.5 13" stroke="#f08010" stroke-width="1.5" fill="none"/></svg>
<svg style="left:20px;top:578px;" width="6" height="6" viewBox="0 0 6 6"><path d="M5.5 0 V5.5 H0 Z" fill="#000"/></svg>
<svg style="left:7px;top:593px;" width="16" height="16" viewBox="0 0 16 16"><path d="M1 4.5 L4.5 1 L8 4.5 L4.5 8 Z" fill="#fff" stroke="#4a5078" stroke-width="1.2"/><path d="M2 5.5 H7 L4.5 8 Z" fill="#f08010"/><path d="M8 14.5 Q10 9 12 8.5 Q14 9 16 14.5 Z" fill="#f8c040"/></svg>
<svg style="left:20px;top:603px;" width="6" height="6" viewBox="0 0 6 6"><path d="M5.5 0 V5.5 H0 Z" fill="#000"/></svg>
<div class="a" style="left:51px;top:133px;width:687px;height:1px;background:#bab6ac"></div>
<div class="a" style="left:50px;top:134px;width:1px;height:544px;background:#bab6ac"></div>
<div class="a" style="left:50px;top:133px;width:1px;height:1px;background:#000"></div>
<svg style="left:0;top:0" width="1024" height="748"><path d="M39 121h1v2h-1z M39 125h1v2h-1z M39 129h1v2h-1z M37 123h2v1h-2z M41 123h2v1h-2z M45 123h2v1h-2z M41 125h1v1h-1z M42 126h1v1h-1z M43 127h1v1h-1z M45 127h1v3h-3v-1h1v-1h1z" fill="#000" shape-rendering="crispEdges"/></svg>
<svg style="left:0;top:0" width="1024" height="748"><path d="M52.5 125 V132 M57.5 130 V132 M63.5 130 V132 M68.5 130 V132 M73.5 130 V132 M79.5 129 V132 M84.5 130 V132 M90.5 130 V132 M95.5 130 V132 M100.5 130 V132 M106.5 125 V132 M111.5 130 V132 M116.5 130 V132 M122.5 130 V132 M127.5 130 V132 M133.5 129 V132 M138.5 130 V132 M143.5 130 V132 M149.5 130 V132 M154.5 130 V132 M159.5 125 V132 M165.5 130 V132 M170.5 130 V132 M176.5 130 V132 M181.5 130 V132 M186.5 129 V132 M192.5 130 V132 M197.5 130 V132 M202.5 130 V132 M208.5 130 V132 M213.5 125 V132 M219.5 130 V132 M224.5 130 V132 M229.5 130 V132 M235.5 130 V132 M240.5 129 V132 M245.5 130 V132 M251.5 130 V132 M256.5 130 V132 M262.5 130 V132 M267.5 125 V132 M272.5 130 V132 M278.5 130 V132 M283.5 130 V132 M288.5 130 V132 M294.5 129 V132 M299.5 130 V132 M305.5 130 V132 M310.5 130 V132 M315.5 130 V132 M321.5 125 V132 M326.5 130 V132 M332.5 130 V132 M337.5 130 V132 M342.5 130 V132 M348.5 129 V132 M353.5 130 V132 M358.5 130 V132 M364.5 130 V132 M369.5 130 V132 M375.5 125 V132 M380.5 130 V132 M385.5 130 V132 M391.5 130 V132 M396.5 130 V132 M401.5 129 V132 M407.5 130 V132 M412.5 130 V132 M418.5 130 V132 M423.5 130 V132 M428.5 125 V132 M434.5 130 V132 M439.5 130 V132 M444.5 130 V132 M450.5 130 V132 M455.5 129 V132 M461.5 130 V132 M466.5 130 V132 M471.5 130 V132 M477.5 130 V132 M482.5 125 V132 M487.5 130 V132 M493.5 130 V132 M498.5 130 V132 M504.5 130 V132 M509.5 129 V132 M514.5 130 V132 M520.5 130 V132 M525.5 130 V132 M530.5 130 V132 M536.5 125 V132 M541.5 130 V132 M547.5 130 V132 M552.5 130 V132 M557.5 130 V132 M563.5 129 V132 M568.5 130 V132 M573.5 130 V132 M579.5 130 V132 M584.5 130 V132 M590.5 125 V132 M595.5 130 V132 M600.5 130 V132 M606.5 130 V132 M611.5 130 V132 M617.5 129 V132 M622.5 130 V132 M627.5 130 V132 M633.5 130 V132 M638.5 130 V132 M643.5 125 V132 M649.5 130 V132 M654.5 130 V132 M660.5 130 V132 M665.5 130 V132 M670.5 129 V132 M676.5 130 V132 M681.5 130 V132 M686.5 130 V132 M692.5 130 V132 M697.5 125 V132 M703.5 130 V132 M708.5 130 V132 M713.5 130 V132 M719.5 130 V132 M724.5 129 V132 M729.5 130 V132 M735.5 130 V132" stroke="#000" stroke-width="1" shape-rendering="crispEdges"/></svg>
<svg style="left:0;top:0" width="1024" height="748"><defs><clipPath id="hc"><rect x="51" y="113" width="620" height="20"/></clipPath></defs><path clip-path="url(#hc)" d="M47 117h1v1h-1zM46 118h1v1h-1zM47 118h1v1h-1zM47 119h1v1h-1zM47 120h1v1h-1zM47 121h1v1h-1zM47 122h1v1h-1zM46 123h1v1h-1zM47 123h1v1h-1zM48 123h1v1h-1zM51 117h1v1h-1zM52 117h1v1h-1zM50 118h1v1h-1zM53 118h1v1h-1zM50 119h1v1h-1zM53 119h1v1h-1zM50 120h1v1h-1zM53 120h1v1h-1zM50 121h1v1h-1zM53 121h1v1h-1zM50 122h1v1h-1zM53 122h1v1h-1zM51 123h1v1h-1zM52 123h1v1h-1zM56 117h1v1h-1zM57 117h1v1h-1zM55 118h1v1h-1zM58 118h1v1h-1zM55 119h1v1h-1zM58 119h1v1h-1zM55 120h1v1h-1zM58 120h1v1h-1zM55 121h1v1h-1zM58 121h1v1h-1zM55 122h1v1h-1zM58 122h1v1h-1zM56 123h1v1h-1zM57 123h1v1h-1zM105 117h1v1h-1zM106 117h1v1h-1zM104 118h1v1h-1zM107 118h1v1h-1zM104 119h1v1h-1zM107 119h1v1h-1zM104 120h1v1h-1zM107 120h1v1h-1zM104 121h1v1h-1zM107 121h1v1h-1zM104 122h1v1h-1zM107 122h1v1h-1zM105 123h1v1h-1zM106 123h1v1h-1zM154 117h1v1h-1zM153 118h1v1h-1zM154 118h1v1h-1zM154 119h1v1h-1zM154 120h1v1h-1zM154 121h1v1h-1zM154 122h1v1h-1zM153 123h1v1h-1zM154 123h1v1h-1zM155 123h1v1h-1zM158 117h1v1h-1zM159 117h1v1h-1zM157 118h1v1h-1zM160 118h1v1h-1zM157 119h1v1h-1zM160 119h1v1h-1zM157 120h1v1h-1zM160 120h1v1h-1zM157 121h1v1h-1zM160 121h1v1h-1zM157 122h1v1h-1zM160 122h1v1h-1zM158 123h1v1h-1zM159 123h1v1h-1zM163 117h1v1h-1zM164 117h1v1h-1zM162 118h1v1h-1zM165 118h1v1h-1zM162 119h1v1h-1zM165 119h1v1h-1zM162 120h1v1h-1zM165 120h1v1h-1zM162 121h1v1h-1zM165 121h1v1h-1zM162 122h1v1h-1zM165 122h1v1h-1zM163 123h1v1h-1zM164 123h1v1h-1zM207 117h1v1h-1zM208 117h1v1h-1zM206 118h1v1h-1zM209 118h1v1h-1zM209 119h1v1h-1zM208 120h1v1h-1zM207 121h1v1h-1zM206 122h1v1h-1zM206 123h1v1h-1zM207 123h1v1h-1zM208 123h1v1h-1zM209 123h1v1h-1zM212 117h1v1h-1zM213 117h1v1h-1zM211 118h1v1h-1zM214 118h1v1h-1zM211 119h1v1h-1zM214 119h1v1h-1zM211 120h1v1h-1zM214 120h1v1h-1zM211 121h1v1h-1zM214 121h1v1h-1zM211 122h1v1h-1zM214 122h1v1h-1zM212 123h1v1h-1zM213 123h1v1h-1zM217 117h1v1h-1zM218 117h1v1h-1zM216 118h1v1h-1zM219 118h1v1h-1zM216 119h1v1h-1zM219 119h1v1h-1zM216 120h1v1h-1zM219 120h1v1h-1zM216 121h1v1h-1zM219 121h1v1h-1zM216 122h1v1h-1zM219 122h1v1h-1zM217 123h1v1h-1zM218 123h1v1h-1zM261 117h1v1h-1zM262 117h1v1h-1zM260 118h1v1h-1zM263 118h1v1h-1zM263 119h1v1h-1zM261 120h1v1h-1zM262 120h1v1h-1zM263 121h1v1h-1zM260 122h1v1h-1zM263 122h1v1h-1zM261 123h1v1h-1zM262 123h1v1h-1zM266 117h1v1h-1zM267 117h1v1h-1zM265 118h1v1h-1zM268 118h1v1h-1zM265 119h1v1h-1zM268 119h1v1h-1zM265 120h1v1h-1zM268 120h1v1h-1zM265 121h1v1h-1zM268 121h1v1h-1zM265 122h1v1h-1zM268 122h1v1h-1zM266 123h1v1h-1zM267 123h1v1h-1zM271 117h1v1h-1zM272 117h1v1h-1zM270 118h1v1h-1zM273 118h1v1h-1zM270 119h1v1h-1zM273 119h1v1h-1zM270 120h1v1h-1zM273 120h1v1h-1zM270 121h1v1h-1zM273 121h1v1h-1zM270 122h1v1h-1zM273 122h1v1h-1zM271 123h1v1h-1zM272 123h1v1h-1zM316 117h1v1h-1zM315 118h1v1h-1zM316 118h1v1h-1zM314 119h1v1h-1zM316 119h1v1h-1zM314 120h1v1h-1zM316 120h1v1h-1zM314 121h1v1h-1zM315 121h1v1h-1zM316 121h1v1h-1zM317 121h1v1h-1zM316 122h1v1h-1zM316 123h1v1h-1zM320 117h1v1h-1zM321 117h1v1h-1zM319 118h1v1h-1zM322 118h1v1h-1zM319 119h1v1h-1zM322 119h1v1h-1zM319 120h1v1h-1zM322 120h1v1h-1zM319 121h1v1h-1zM322 121h1v1h-1zM319 122h1v1h-1zM322 122h1v1h-1zM320 123h1v1h-1zM321 123h1v1h-1zM325 117h1v1h-1zM326 117h1v1h-1zM324 118h1v1h-1zM327 118h1v1h-1zM324 119h1v1h-1zM327 119h1v1h-1zM324 120h1v1h-1zM327 120h1v1h-1zM324 121h1v1h-1zM327 121h1v1h-1zM324 122h1v1h-1zM327 122h1v1h-1zM325 123h1v1h-1zM326 123h1v1h-1zM368 117h1v1h-1zM369 117h1v1h-1zM370 117h1v1h-1zM371 117h1v1h-1zM368 118h1v1h-1zM368 119h1v1h-1zM369 119h1v1h-1zM370 119h1v1h-1zM371 120h1v1h-1zM371 121h1v1h-1zM368 122h1v1h-1zM371 122h1v1h-1zM369 123h1v1h-1zM370 123h1v1h-1zM374 117h1v1h-1zM375 117h1v1h-1zM373 118h1v1h-1zM376 118h1v1h-1zM373 119h1v1h-1zM376 119h1v1h-1zM373 120h1v1h-1zM376 120h1v1h-1zM373 121h1v1h-1zM376 121h1v1h-1zM373 122h1v1h-1zM376 122h1v1h-1zM374 123h1v1h-1zM375 123h1v1h-1zM379 117h1v1h-1zM380 117h1v1h-1zM378 118h1v1h-1zM381 118h1v1h-1zM378 119h1v1h-1zM381 119h1v1h-1zM378 120h1v1h-1zM381 120h1v1h-1zM378 121h1v1h-1zM381 121h1v1h-1zM378 122h1v1h-1zM381 122h1v1h-1zM379 123h1v1h-1zM380 123h1v1h-1zM422 117h1v1h-1zM423 117h1v1h-1zM421 118h1v1h-1zM421 119h1v1h-1zM421 120h1v1h-1zM422 120h1v1h-1zM423 120h1v1h-1zM421 121h1v1h-1zM424 121h1v1h-1zM421 122h1v1h-1zM424 122h1v1h-1zM422 123h1v1h-1zM423 123h1v1h-1zM427 117h1v1h-1zM428 117h1v1h-1zM426 118h1v1h-1zM429 118h1v1h-1zM426 119h1v1h-1zM429 119h1v1h-1zM426 120h1v1h-1zM429 120h1v1h-1zM426 121h1v1h-1zM429 121h1v1h-1zM426 122h1v1h-1zM429 122h1v1h-1zM427 123h1v1h-1zM428 123h1v1h-1zM432 117h1v1h-1zM433 117h1v1h-1zM431 118h1v1h-1zM434 118h1v1h-1zM431 119h1v1h-1zM434 119h1v1h-1zM431 120h1v1h-1zM434 120h1v1h-1zM431 121h1v1h-1zM434 121h1v1h-1zM431 122h1v1h-1zM434 122h1v1h-1zM432 123h1v1h-1zM433 123h1v1h-1zM475 117h1v1h-1zM476 117h1v1h-1zM477 117h1v1h-1zM478 117h1v1h-1zM478 118h1v1h-1zM477 119h1v1h-1zM477 120h1v1h-1zM476 121h1v1h-1zM476 122h1v1h-1zM476 123h1v1h-1zM481 117h1v1h-1zM482 117h1v1h-1zM480 118h1v1h-1zM483 118h1v1h-1zM480 119h1v1h-1zM483 119h1v1h-1zM480 120h1v1h-1zM483 120h1v1h-1zM480 121h1v1h-1zM483 121h1v1h-1zM480 122h1v1h-1zM483 122h1v1h-1zM481 123h1v1h-1zM482 123h1v1h-1zM486 117h1v1h-1zM487 117h1v1h-1zM485 118h1v1h-1zM488 118h1v1h-1zM485 119h1v1h-1zM488 119h1v1h-1zM485 120h1v1h-1zM488 120h1v1h-1zM485 121h1v1h-1zM488 121h1v1h-1zM485 122h1v1h-1zM488 122h1v1h-1zM486 123h1v1h-1zM487 123h1v1h-1zM530 117h1v1h-1zM531 117h1v1h-1zM529 118h1v1h-1zM532 118h1v1h-1zM529 119h1v1h-1zM532 119h1v1h-1zM530 120h1v1h-1zM531 120h1v1h-1zM529 121h1v1h-1zM532 121h1v1h-1zM529 122h1v1h-1zM532 122h1v1h-1zM530 123h1v1h-1zM531 123h1v1h-1zM535 117h1v1h-1zM536 117h1v1h-1zM534 118h1v1h-1zM537 118h1v1h-1zM534 119h1v1h-1zM537 119h1v1h-1zM534 120h1v1h-1zM537 120h1v1h-1zM534 121h1v1h-1zM537 121h1v1h-1zM534 122h1v1h-1zM537 122h1v1h-1zM535 123h1v1h-1zM536 123h1v1h-1zM540 117h1v1h-1zM541 117h1v1h-1zM539 118h1v1h-1zM542 118h1v1h-1zM539 119h1v1h-1zM542 119h1v1h-1zM539 120h1v1h-1zM542 120h1v1h-1zM539 121h1v1h-1zM542 121h1v1h-1zM539 122h1v1h-1zM542 122h1v1h-1zM540 123h1v1h-1zM541 123h1v1h-1zM584 117h1v1h-1zM585 117h1v1h-1zM583 118h1v1h-1zM586 118h1v1h-1zM583 119h1v1h-1zM586 119h1v1h-1zM584 120h1v1h-1zM585 120h1v1h-1zM586 120h1v1h-1zM586 121h1v1h-1zM586 122h1v1h-1zM584 123h1v1h-1zM585 123h1v1h-1zM589 117h1v1h-1zM590 117h1v1h-1zM588 118h1v1h-1zM591 118h1v1h-1zM588 119h1v1h-1zM591 119h1v1h-1zM588 120h1v1h-1zM591 120h1v1h-1zM588 121h1v1h-1zM591 121h1v1h-1zM588 122h1v1h-1zM591 122h1v1h-1zM589 123h1v1h-1zM590 123h1v1h-1zM594 117h1v1h-1zM595 117h1v1h-1zM593 118h1v1h-1zM596 118h1v1h-1zM593 119h1v1h-1zM596 119h1v1h-1zM593 120h1v1h-1zM596 120h1v1h-1zM593 121h1v1h-1zM596 121h1v1h-1zM593 122h1v1h-1zM596 122h1v1h-1zM594 123h1v1h-1zM595 123h1v1h-1zM636 117h1v1h-1zM635 118h1v1h-1zM636 118h1v1h-1zM636 119h1v1h-1zM636 120h1v1h-1zM636 121h1v1h-1zM636 122h1v1h-1zM635 123h1v1h-1zM636 123h1v1h-1zM637 123h1v1h-1zM640 117h1v1h-1zM641 117h1v1h-1zM639 118h1v1h-1zM642 118h1v1h-1zM639 119h1v1h-1zM642 119h1v1h-1zM639 120h1v1h-1zM642 120h1v1h-1zM639 121h1v1h-1zM642 121h1v1h-1zM639 122h1v1h-1zM642 122h1v1h-1zM640 123h1v1h-1zM641 123h1v1h-1zM645 117h1v1h-1zM646 117h1v1h-1zM644 118h1v1h-1zM647 118h1v1h-1zM644 119h1v1h-1zM647 119h1v1h-1zM644 120h1v1h-1zM647 120h1v1h-1zM644 121h1v1h-1zM647 121h1v1h-1zM644 122h1v1h-1zM647 122h1v1h-1zM645 123h1v1h-1zM646 123h1v1h-1zM650 117h1v1h-1zM651 117h1v1h-1zM649 118h1v1h-1zM652 118h1v1h-1zM649 119h1v1h-1zM652 119h1v1h-1zM649 120h1v1h-1zM652 120h1v1h-1zM649 121h1v1h-1zM652 121h1v1h-1zM649 122h1v1h-1zM652 122h1v1h-1zM650 123h1v1h-1zM651 123h1v1h-1z" fill="#000" shape-rendering="crispEdges"/></svg>
<div class="t" style="left:680px;top:116px;font-size:9px;line-height:10px">миллиметры</div>
<svg style="left:0;top:0" width="1024" height="748"><path d="M46 674.5 H49 M47 668.5 H49 M47 663.5 H49 M47 658.5 H49 M47 652.5 H49 M45 647.5 H49 M47 642.5 H49 M47 636.5 H49 M47 631.5 H49 M47 625.5 H49 M46 620.5 H49 M47 615.5 H49 M47 609.5 H49 M47 604.5 H49 M47 599.5 H49 M45 593.5 H49 M47 588.5 H49 M47 582.5 H49 M47 577.5 H49 M47 572.5 H49 M46 566.5 H49 M47 561.5 H49 M47 556.5 H49 M47 550.5 H49 M47 545.5 H49 M45 539.5 H49 M47 534.5 H49 M47 529.5 H49 M47 523.5 H49 M47 518.5 H49 M46 512.5 H49 M47 507.5 H49 M47 502.5 H49 M47 496.5 H49 M47 491.5 H49 M45 486.5 H49 M47 480.5 H49 M47 475.5 H49 M47 469.5 H49 M47 464.5 H49 M46 459.5 H49 M47 453.5 H49 M47 448.5 H49 M47 443.5 H49 M47 437.5 H49 M45 432.5 H49 M47 426.5 H49 M47 421.5 H49 M47 416.5 H49 M47 410.5 H49 M46 405.5 H49 M47 400.5 H49 M47 394.5 H49 M47 389.5 H49 M47 383.5 H49 M45 378.5 H49 M47 373.5 H49 M47 367.5 H49 M47 362.5 H49 M47 357.5 H49 M46 351.5 H49 M47 346.5 H49 M47 340.5 H49 M47 335.5 H49 M47 330.5 H49 M45 324.5 H49 M47 319.5 H49 M47 314.5 H49 M47 308.5 H49 M47 303.5 H49 M46 297.5 H49 M47 292.5 H49 M47 287.5 H49 M47 281.5 H49 M47 276.5 H49 M45 271.5 H49 M47 265.5 H49 M47 260.5 H49 M47 254.5 H49 M47 249.5 H49 M46 244.5 H49 M47 238.5 H49 M47 233.5 H49 M47 227.5 H49 M47 222.5 H49 M45 217.5 H49 M47 211.5 H49 M47 206.5 H49 M47 201.5 H49 M47 195.5 H49 M46 190.5 H49 M47 184.5 H49 M47 179.5 H49 M47 174.5 H49 M47 168.5 H49 M45 163.5 H49 M47 158.5 H49 M47 152.5 H49 M47 147.5 H49 M47 141.5 H49 M46 136.5 H49" stroke="#000" stroke-width="1" shape-rendering="crispEdges"/></svg>
<svg style="left:0;top:0" width="1024" height="748"><path d="M37 599h1v1h-1zM37 598h1v1h-1zM38 600h1v1h-1zM38 597h1v1h-1zM39 597h1v1h-1zM40 598h1v1h-1zM41 599h1v1h-1zM42 600h1v1h-1zM43 600h1v1h-1zM43 599h1v1h-1zM43 598h1v1h-1zM43 597h1v1h-1zM37 594h1v1h-1zM37 593h1v1h-1zM38 595h1v1h-1zM38 592h1v1h-1zM39 595h1v1h-1zM39 592h1v1h-1zM40 595h1v1h-1zM40 592h1v1h-1zM41 595h1v1h-1zM41 592h1v1h-1zM42 595h1v1h-1zM42 592h1v1h-1zM43 594h1v1h-1zM43 593h1v1h-1zM37 589h1v1h-1zM37 588h1v1h-1zM38 590h1v1h-1zM38 587h1v1h-1zM39 590h1v1h-1zM39 587h1v1h-1zM40 590h1v1h-1zM40 587h1v1h-1zM41 590h1v1h-1zM41 587h1v1h-1zM42 590h1v1h-1zM42 587h1v1h-1zM43 589h1v1h-1zM43 588h1v1h-1zM37 544h1v1h-1zM38 545h1v1h-1zM38 544h1v1h-1zM39 544h1v1h-1zM40 544h1v1h-1zM41 544h1v1h-1zM42 544h1v1h-1zM43 545h1v1h-1zM43 544h1v1h-1zM43 543h1v1h-1zM37 540h1v1h-1zM37 539h1v1h-1zM38 541h1v1h-1zM38 538h1v1h-1zM39 541h1v1h-1zM39 538h1v1h-1zM40 541h1v1h-1zM40 538h1v1h-1zM41 541h1v1h-1zM41 538h1v1h-1zM42 541h1v1h-1zM42 538h1v1h-1zM43 540h1v1h-1zM43 539h1v1h-1zM37 535h1v1h-1zM37 534h1v1h-1zM38 536h1v1h-1zM38 533h1v1h-1zM39 536h1v1h-1zM39 533h1v1h-1zM40 536h1v1h-1zM40 533h1v1h-1zM41 536h1v1h-1zM41 533h1v1h-1zM42 536h1v1h-1zM42 533h1v1h-1zM43 535h1v1h-1zM43 534h1v1h-1zM37 487h1v1h-1zM37 486h1v1h-1zM38 488h1v1h-1zM38 485h1v1h-1zM39 488h1v1h-1zM39 485h1v1h-1zM40 488h1v1h-1zM40 485h1v1h-1zM41 488h1v1h-1zM41 485h1v1h-1zM42 488h1v1h-1zM42 485h1v1h-1zM43 487h1v1h-1zM43 486h1v1h-1zM37 437h1v1h-1zM38 438h1v1h-1zM38 437h1v1h-1zM39 437h1v1h-1zM40 437h1v1h-1zM41 437h1v1h-1zM42 437h1v1h-1zM43 438h1v1h-1zM43 437h1v1h-1zM43 436h1v1h-1zM37 433h1v1h-1zM37 432h1v1h-1zM38 434h1v1h-1zM38 431h1v1h-1zM39 434h1v1h-1zM39 431h1v1h-1zM40 434h1v1h-1zM40 431h1v1h-1zM41 434h1v1h-1zM41 431h1v1h-1zM42 434h1v1h-1zM42 431h1v1h-1zM43 433h1v1h-1zM43 432h1v1h-1zM37 428h1v1h-1zM37 427h1v1h-1zM38 429h1v1h-1zM38 426h1v1h-1zM39 429h1v1h-1zM39 426h1v1h-1zM40 429h1v1h-1zM40 426h1v1h-1zM41 429h1v1h-1zM41 426h1v1h-1zM42 429h1v1h-1zM42 426h1v1h-1zM43 428h1v1h-1zM43 427h1v1h-1zM37 384h1v1h-1zM37 383h1v1h-1zM38 385h1v1h-1zM38 382h1v1h-1zM39 382h1v1h-1zM40 383h1v1h-1zM41 384h1v1h-1zM42 385h1v1h-1zM43 385h1v1h-1zM43 384h1v1h-1zM43 383h1v1h-1zM43 382h1v1h-1zM37 379h1v1h-1zM37 378h1v1h-1zM38 380h1v1h-1zM38 377h1v1h-1zM39 380h1v1h-1zM39 377h1v1h-1zM40 380h1v1h-1zM40 377h1v1h-1zM41 380h1v1h-1zM41 377h1v1h-1zM42 380h1v1h-1zM42 377h1v1h-1zM43 379h1v1h-1zM43 378h1v1h-1zM37 374h1v1h-1zM37 373h1v1h-1zM38 375h1v1h-1zM38 372h1v1h-1zM39 375h1v1h-1zM39 372h1v1h-1zM40 375h1v1h-1zM40 372h1v1h-1zM41 375h1v1h-1zM41 372h1v1h-1zM42 375h1v1h-1zM42 372h1v1h-1zM43 374h1v1h-1zM43 373h1v1h-1zM37 330h1v1h-1zM37 329h1v1h-1zM38 331h1v1h-1zM38 328h1v1h-1zM39 328h1v1h-1zM40 330h1v1h-1zM40 329h1v1h-1zM41 328h1v1h-1zM42 331h1v1h-1zM42 328h1v1h-1zM43 330h1v1h-1zM43 329h1v1h-1zM37 325h1v1h-1zM37 324h1v1h-1zM38 326h1v1h-1zM38 323h1v1h-1zM39 326h1v1h-1zM39 323h1v1h-1zM40 326h1v1h-1zM40 323h1v1h-1zM41 326h1v1h-1zM41 323h1v1h-1zM42 326h1v1h-1zM42 323h1v1h-1zM43 325h1v1h-1zM43 324h1v1h-1zM37 320h1v1h-1zM37 319h1v1h-1zM38 321h1v1h-1zM38 318h1v1h-1zM39 321h1v1h-1zM39 318h1v1h-1zM40 321h1v1h-1zM40 318h1v1h-1zM41 321h1v1h-1zM41 318h1v1h-1zM42 321h1v1h-1zM42 318h1v1h-1zM43 320h1v1h-1zM43 319h1v1h-1zM37 276h1v1h-1zM38 277h1v1h-1zM38 276h1v1h-1zM39 278h1v1h-1zM39 276h1v1h-1zM40 278h1v1h-1zM40 276h1v1h-1zM41 278h1v1h-1zM41 277h1v1h-1zM41 276h1v1h-1zM41 275h1v1h-1zM42 276h1v1h-1zM43 276h1v1h-1zM37 272h1v1h-1zM37 271h1v1h-1zM38 273h1v1h-1zM38 270h1v1h-1zM39 273h1v1h-1zM39 270h1v1h-1zM40 273h1v1h-1zM40 270h1v1h-1zM41 273h1v1h-1zM41 270h1v1h-1zM42 273h1v1h-1zM42 270h1v1h-1zM43 272h1v1h-1zM43 271h1v1h-1zM37 267h1v1h-1zM37 266h1v1h-1zM38 268h1v1h-1zM38 265h1v1h-1zM39 268h1v1h-1zM39 265h1v1h-1zM40 268h1v1h-1zM40 265h1v1h-1zM41 268h1v1h-1zM41 265h1v1h-1zM42 268h1v1h-1zM42 265h1v1h-1zM43 267h1v1h-1zM43 266h1v1h-1zM37 224h1v1h-1zM37 223h1v1h-1zM37 222h1v1h-1zM37 221h1v1h-1zM38 224h1v1h-1zM39 224h1v1h-1zM39 223h1v1h-1zM39 222h1v1h-1zM40 221h1v1h-1zM41 221h1v1h-1zM42 224h1v1h-1zM42 221h1v1h-1zM43 223h1v1h-1zM43 222h1v1h-1zM37 218h1v1h-1zM37 217h1v1h-1zM38 219h1v1h-1zM38 216h1v1h-1zM39 219h1v1h-1zM39 216h1v1h-1zM40 219h1v1h-1zM40 216h1v1h-1zM41 219h1v1h-1zM41 216h1v1h-1zM42 219h1v1h-1zM42 216h1v1h-1zM43 218h1v1h-1zM43 217h1v1h-1zM37 213h1v1h-1zM37 212h1v1h-1zM38 214h1v1h-1zM38 211h1v1h-1zM39 214h1v1h-1zM39 211h1v1h-1zM40 214h1v1h-1zM40 211h1v1h-1zM41 214h1v1h-1zM41 211h1v1h-1zM42 214h1v1h-1zM42 211h1v1h-1zM43 213h1v1h-1zM43 212h1v1h-1zM37 169h1v1h-1zM37 168h1v1h-1zM38 170h1v1h-1zM39 170h1v1h-1zM40 170h1v1h-1zM40 169h1v1h-1zM40 168h1v1h-1zM41 170h1v1h-1zM41 167h1v1h-1zM42 170h1v1h-1zM42 167h1v1h-1zM43 169h1v1h-1zM43 168h1v1h-1zM37 164h1v1h-1zM37 163h1v1h-1zM38 165h1v1h-1zM38 162h1v1h-1zM39 165h1v1h-1zM39 162h1v1h-1zM40 165h1v1h-1zM40 162h1v1h-1zM41 165h1v1h-1zM41 162h1v1h-1zM42 165h1v1h-1zM42 162h1v1h-1zM43 164h1v1h-1zM43 163h1v1h-1zM37 159h1v1h-1zM37 158h1v1h-1zM38 160h1v1h-1zM38 157h1v1h-1zM39 160h1v1h-1zM39 157h1v1h-1zM40 160h1v1h-1zM40 157h1v1h-1zM41 160h1v1h-1zM41 157h1v1h-1zM42 160h1v1h-1zM42 157h1v1h-1zM43 159h1v1h-1zM43 158h1v1h-1z" fill="#000" shape-rendering="crispEdges"/></svg>
<div class="t" style="left:10.5px;top:642.5px;width:60px;height:10px;text-align:center;font-size:9px;line-height:10px;transform:rotate(-90deg)">миллиметры</div>
<svg style="left:33px;top:451px;" width="16" height="1" viewBox="0 0 16 1"><path d="M0 0.5 H3 M6 0.5 H9 M12 0.5 H15" stroke="#000" shape-rendering="crispEdges"/></svg>
<svg style="left:538px;top:116px;" width="1" height="16" viewBox="0 0 1 16"><path d="M0.5 0 V9 M0.5 12 V15" stroke="#000" shape-rendering="crispEdges"/></svg>
<div class="a" style="left:51px;top:134px;width:673px;height:529px;background:#fff"></div>
<div class="a" style="left:112px;top:317px;width:538px;height:174px;background:#c0c0c0"></div>
<div class="a" style="left:106px;top:313px;width:538px;height:174px;background:#fff;border:1px solid #a0a0a0"></div>
<svg style="left:0;top:0" width="1024" height="748"><g fill="none" stroke="#000" stroke-width="0.9"><path d="M234 202.5 C242 212 252 230 259.4 231.2 C262 231 263 228.5 265 228.5 C272 229 285 252 293.5 258.4 C296 259 297 256.5 299.4 256.5 C307 258 318 281 327.4 286.8 C330 287 331 283.8 333.2 283.8 C334.5 284 335.5 285 336 285.6"/><path d="M211.3 315.3 C235 325 252 364 272.5 365.3 C288 366 296 350.1 309.6 350.1 C330 350.1 352 401 374 401 C390 401 398 386.5 411 386.5 C432 386.5 455 437.1 475.5 437.1 C492 437.1 502 422.6 517.4 422.6"/></g></svg>
<div class="a" style="left:724px;top:134px;width:14px;height:530px;background:#ECE9E2"></div>
<div class="a" style="left:724px;top:134px;width:13px;height:14px;background:linear-gradient(90deg,#f4f2ec,#e4e1d8);border:1px solid #c8c4ba;border-radius:1px"></div>
<svg style="left:727px;top:139px;" width="7" height="4" viewBox="0 0 7 4"><path d="M0.5 3.5 L3.5 0.5 L6.5 3.5" fill="none" stroke="#222" stroke-width="1.5"/></svg>
<div class="a" style="left:724px;top:148px;width:13px;height:500px;background:linear-gradient(90deg,#f2f0ea,#e2dfd6);border:1px solid #b8b4aa;border-radius:1px"></div>
<svg style="left:727px;top:393px;" width="7" height="9" viewBox="0 0 7 9"><path d="M0 0.5 H7 M0 2.5 H7 M0 4.5 H7 M0 6.5 H7" stroke="#a8a49a"/></svg>
<div class="a" style="left:724px;top:649px;width:13px;height:14px;background:linear-gradient(90deg,#f4f2ec,#e4e1d8);border:1px solid #c8c4ba;border-radius:1px"></div>
<svg style="left:727px;top:654px;" width="7" height="4" viewBox="0 0 7 4"><path d="M0.5 0.5 L3.5 3.5 L6.5 0.5" fill="none" stroke="#222" stroke-width="1.5"/></svg>
<div class="a" style="left:738px;top:113px;width:1px;height:586px;background:#d6d2c8"></div>
<div class="a" style="left:51px;top:663px;width:673px;height:1px;background:#d0ccc2"></div>
<div class="a" style="left:51px;top:664px;width:346px;height:14px;background:#ECE9E2"></div>
<svg style="left:53px;top:664px;" width="10" height="12" viewBox="0 0 10 12"><path d="M0.5 0.5 H5.5 L8.5 3.5 V11.5 H0.5 Z" fill="#fff" stroke="#000" stroke-width="1.2"/><path d="M5.5 0.5 V3.5 H8.5" fill="none" stroke="#000"/><path d="M4.5 5 V10 M2 7.5 H7" stroke="#000" stroke-width="1.1"/></svg>
<svg style="left:68px;top:666px;" width="8" height="10" viewBox="0 0 8 10"><path d="M0.5 0 V10" stroke="#858585" stroke-width="1.3"/><path d="M7.5 0.5 L2 5 L7.5 9.5 Z" fill="#858585"/></svg>
<svg style="left:83px;top:666px;" width="7" height="10" viewBox="0 0 7 10"><path d="M6.5 0.5 L1 5 L6.5 9.5 Z" fill="#858585"/></svg>
<div class="t" style="left:108px;top:665px;">1 из 1</div>
<svg style="left:159px;top:666px;" width="6" height="10" viewBox="0 0 6 10"><path d="M0.5 0.5 L5.5 5 L0.5 9.5 Z" fill="#858585"/></svg>
<svg style="left:171px;top:666px;" width="8" height="10" viewBox="0 0 8 10"><path d="M0.5 0.5 L6 5 L0.5 9.5 Z" fill="#858585"/><path d="M7.5 0 V10" stroke="#858585" stroke-width="1.3"/></svg>
<svg style="left:184px;top:664px;" width="10" height="12" viewBox="0 0 10 12"><path d="M0.5 0.5 H5.5 L8.5 3.5 V11.5 H0.5 Z" fill="#fff" stroke="#000" stroke-width="1.2"/><path d="M5.5 0.5 V3.5 H8.5" fill="none" stroke="#000"/><path d="M4.5 5 V10 M2 7.5 H7" stroke="#000" stroke-width="1.1"/></svg>
<svg style="left:196px;top:663px;" width="90" height="15" viewBox="0 0 90 15"><path d="M0.5 15 V0.5 H80 L87 7 V15" fill="#fff" stroke="#c0bcb2"/></svg>
<div class="t" style="left:210px;top:664px;">Страница 1</div>
<svg style="left:391px;top:667px;" width="2" height="9" viewBox="0 0 2 9"><path d="M0.5 0 V2 M0.5 6 V8" stroke="#888"/></svg>
<div class="a" style="left:397px;top:664px;width:326px;height:14px;background:#f6f5f2"></div>
<div class="a" style="left:397px;top:664px;width:14px;height:14px;background:linear-gradient(#f4f2ec,#e4e1d8);border:1px solid #c8c4ba"></div>
<svg style="left:401px;top:668px;" width="4" height="7" viewBox="0 0 4 7"><path d="M3.5 0.5 L0.5 3.5 L3.5 6.5" fill="none" stroke="#222" stroke-width="1.5"/></svg>
<div class="a" style="left:513px;top:664px;width:164px;height:14px;background:linear-gradient(#f2f0ea,#e2dfd6);border:1px solid #b8b4aa;border-radius:1px"></div>
<svg style="left:591px;top:667px;" width="9" height="8" viewBox="0 0 9 8"><path d="M0.5 0 V8 M2.5 0 V8 M4.5 0 V8 M6.5 0 V8" stroke="#a8a49a"/></svg>
<div class="a" style="left:709px;top:664px;width:14px;height:14px;background:linear-gradient(#f4f2ec,#e4e1d8);border:1px solid #c8c4ba"></div>
<svg style="left:714px;top:668px;" width="4" height="7" viewBox="0 0 4 7"><path d="M0.5 0.5 L3.5 3.5 L0.5 6.5" fill="none" stroke="#222" stroke-width="1.5"/></svg>
<svg style="left:723px;top:664px;" width="14" height="14" viewBox="0 0 14 14"><circle cx="5.5" cy="5.5" r="4.8" fill="#fff" stroke="#3a3f70" stroke-width="1.2"/><circle cx="5.5" cy="5.5" r="1.8" fill="none" stroke="#3a3f70"/><path d="M5.5 1.5 V3.5 M5.5 7.5 V9.5 M1.5 5.5 H3.5 M7.5 5.5 H9.5" stroke="#3a3f70"/><path d="M9 9 L13 13" stroke="#2a2f50" stroke-width="2.4"/></svg>
<div class="a" style="left:30px;top:678px;width:708px;height:2px;background:#fff"></div>
<div class="a" style="left:30px;top:680px;width:708px;height:18px;background:#ECE9E2"></div>
<div class="a" style="left:73px;top:680px;width:665px;height:18px;background:#fff;border-left:1px solid #d6d3cb;border-top:1px solid #d6d3cb"></div>
<div class="a" style="left:30px;top:698px;width:708px;height:1px;background:#cfcbc1"></div>
<svg style="left:34px;top:684px;" width="3" height="12" viewBox="0 0 3 12"><path d="M1.5 0.5 V1.5 M1.5 5.5 V6.5 M1.5 10.5 V11.5" stroke="#999" stroke-width="1.2"/></svg>
<svg style="left:40px;top:682px;" width="15" height="15" viewBox="0 0 15 15"><circle cx="7" cy="7" r="6.5" fill="#f4f4f4" stroke="#c4c4c4"/><circle cx="7" cy="7" r="5" fill="#fff"/><path d="M5 4 L10 7 L5 10 Z" fill="#000"/></svg>
<svg style="left:58px;top:683px;" width="13" height="13" viewBox="0 0 13 13"><path d="M1 12 L6.5 6.5" stroke="#3a7070" stroke-width="2.4"/><path d="M1.5 11.5 L6 7" stroke="#c0e0e0" stroke-width="0.8"/><path d="M8 2.5 L10.5 0.5 L12.5 2.5 L10.5 5 Z" fill="#2a2f50"/><path d="M5 5 L8 8 M6.5 4 L9.5 7" stroke="#2a2f50" stroke-width="2"/></svg>
<svg style="left:75px;top:682px;" width="15" height="14" viewBox="0 0 15 14"><rect x="1" y="1" width="13" height="12" fill="#fff" stroke="#000" stroke-width="2"/><path d="M1 1 L14 13 M14 1 L1 13" stroke="#000" stroke-width="0.9"/></svg>
<div class="t" style="left:197px;top:682px;font-style:italic;color:#aaa7a0;letter-spacing:-0.45px">Перетащите сюда цвета (или объекты), чтобы сохранить их вместе с документом</div>
<div class="a" style="left:739px;top:113px;width:1px;height:586px;background:#d6d2c8"></div>
<div class="a" style="left:740px;top:112px;width:264px;height:1px;background:#cdcac3"></div>
<div class="a" style="left:740px;top:113px;width:264px;height:22px;background:#d5d2cb"></div>
<div class="a" style="left:740px;top:135px;width:264px;height:1px;background:#b2afa8"></div>
<div class="t" style="left:746px;top:119px;">Преобразования</div>
<svg style="left:946px;top:119px;" width="12" height="10" viewBox="0 0 12 10"><path d="M1 1 L5 5 L1 9 M6 1 L10 5 L6 9" fill="none" stroke="#555" stroke-width="1.6"/></svg>
<svg style="left:967px;top:122px;" width="10" height="5" viewBox="0 0 10 5"><path d="M0 5 L5 0 L10 5 Z" fill="#555"/></svg>
<svg style="left:987px;top:119px;" width="10" height="10" viewBox="0 0 10 10"><path d="M1 1 L9 9 M9 1 L1 9" stroke="#555" stroke-width="1.8"/></svg>
<svg style="left:785px;top:150px;" width="16" height="15" viewBox="0 0 16 15"><path d="M6 0.5 H10 V5 H15.5 V10 H10 V14.5 H6 V10 H0.5 V5 H6 Z" fill="#fff" stroke="#4a5078" stroke-width="1"/><path d="M8 1 L8 14 M1 7.5 H15" stroke="#e0e2ec"/></svg>
<div class="a" style="left:807px;top:146px;width:25px;height:23px;background:linear-gradient(#f4f2ec,#e2dfd6);border:1px solid #8e8a82;border-radius:5px;box-shadow:inset 0 1px 1px #fff"></div>
<svg style="left:812px;top:150px;" width="15" height="15" viewBox="0 0 15 15"><path d="M3.5 4 A5.2 5.2 0 1 1 2.5 9" fill="none" stroke="#3a3f60" stroke-width="1.5"/><path d="M0.5 1.5 L5.5 6 L0.5 7 Z" fill="#3a3f60"/></svg>
<svg style="left:838px;top:149px;" width="17" height="17" viewBox="0 0 17 17"><path d="M2.5 5.5 L5.5 1.5 H13.5 L10.5 5.5 Z" fill="#f4f4f8" stroke="#4a5078"/><path d="M2.5 5.5 H10.5 L8 9 L10.5 14.5 H2.5 L0.5 10 Z" fill="#d8dae6" stroke="#8a8fb0"/><path d="M14.5 2 V11" stroke="#222" stroke-width="1.2"/><path d="M12.5 9 H16.5 L14.5 12 Z" fill="#222"/></svg>
<svg style="left:864px;top:149px;" width="16" height="16" viewBox="0 0 16 16"><rect x="0.5" y="0.5" width="14" height="14" fill="none" stroke="#5a6090" stroke-dasharray="1 1.2"/><rect x="0.5" y="7.5" width="7" height="7" fill="#fff" stroke="#4a5078"/><path d="M4 1 V6" stroke="#222"/><path d="M2.5 2.5 L4 0.5 L5.5 2.5 Z" fill="#222"/><path d="M9 11 H14" stroke="#222"/><path d="M12.5 9.5 L14.5 11 L12.5 12.5 Z" fill="#222"/></svg>
<svg style="left:889px;top:150px;" width="17" height="14" viewBox="0 0 17 14"><path d="M4.5 7.5 L0.5 12.5 H12.5 L16 7.5 Z" fill="#f0f0f4" stroke="#4a5078"/><path d="M3 3.5 H12 M1 1 L3 3.5 L1 6" stroke="#3a3f60" stroke-width="1.2" fill="none"/><path d="M0.5 12.5 L4.5 7.5" stroke="#3a3f60" stroke-width="1.4"/></svg>
<div class="a" style="left:750px;top:178px;width:220px;height:1px;background:#cdc9bf"></div>
<svg style="left:779px;top:196px;" width="14" height="13" viewBox="0 0 14 13"><path d="M3.5 3 A5 5 0 1 1 2.5 8" fill="none" stroke="#3a3f60" stroke-width="1.5"/><path d="M0 1 L5 4.5 L0.5 6 Z" fill="#3a3f60"/></svg>
<div class="a" style="left:798px;top:191px;width:90px;height:22px;background:#ECE9E2;border:1px solid #bcb8ae;border-right-color:#fff;border-bottom-color:#fff"></div>
<div class="t" style="left:801px;top:196px;color:#a8a59e">0,0</div>
<div class="a" style="left:871px;top:192px;width:15px;height:20px;background:linear-gradient(90deg,#f0eee9,#fbfaf8)"></div>
<svg style="left:874px;top:195px;" width="10" height="14" viewBox="0 0 10 14"><path d="M1 3.5 L5 0 L9 3.5 V5 L5 2 L1 5 Z" fill="#c8c5be"/><path d="M1 10 L5 13.5 L9 10 V8.5 L5 11.5 L1 8.5 Z" fill="#c8c5be"/></svg>
<svg style="left:893px;top:195px;" width="6" height="6" viewBox="0 0 6 6"><circle cx="3" cy="3" r="2.2" fill="none" stroke="#b8b5ae"/></svg>
<div class="t" style="left:750px;top:223px;">По центру</div>
<div class="a" style="left:818px;top:228px;width:152px;height:1px;background:#cdc9bf"></div>
<div class="t" style="left:784px;top:249px;color:#a8a59e">x:</div>
<div class="a" style="left:798px;top:245px;width:90px;height:23px;background:#ECE9E2;border:1px solid #bcb8ae;border-right-color:#fff;border-bottom-color:#fff"></div>
<div class="t" style="left:801px;top:250px;color:#a8a59e">0,0 мм</div>
<div class="a" style="left:871px;top:246px;width:15px;height:21px;background:linear-gradient(90deg,#f0eee9,#fbfaf8)"></div>
<svg style="left:874px;top:250px;" width="10" height="14" viewBox="0 0 10 14"><path d="M1 3.5 L5 0 L9 3.5 V5 L5 2 L1 5 Z" fill="#c8c5be"/><path d="M1 10 L5 13.5 L9 10 V8.5 L5 11.5 L1 8.5 Z" fill="#c8c5be"/></svg>
<div class="t" style="left:784px;top:274px;color:#a8a59e">y:</div>
<div class="a" style="left:798px;top:270px;width:90px;height:23px;background:#ECE9E2;border:1px solid #bcb8ae;border-right-color:#fff;border-bottom-color:#fff"></div>
<div class="t" style="left:801px;top:275px;color:#a8a59e">0,0 мм</div>
<div class="a" style="left:871px;top:271px;width:15px;height:21px;background:linear-gradient(90deg,#f0eee9,#fbfaf8)"></div>
<svg style="left:874px;top:275px;" width="10" height="14" viewBox="0 0 10 14"><path d="M1 3.5 L5 0 L9 3.5 V5 L5 2 L1 5 Z" fill="#c8c5be"/><path d="M1 10 L5 13.5 L9 10 V8.5 L5 11.5 L1 8.5 Z" fill="#c8c5be"/></svg>
<div class="a" style="left:798px;top:300px;width:13px;height:13px;background:#f6f4f0;border:1px solid #c8c5be"></div>
<svg style="left:800px;top:302px;" width="9" height="9" viewBox="0 0 9 9"><path d="M1 4.5 L3.5 7 L8 1.5" fill="none" stroke="#b8b5ae" stroke-width="1.8"/></svg>
<div class="t" style="left:814px;top:301px;color:#a8a59e">Относительно центра</div>
<svg style="left:802px;top:324px;" width="37" height="38" viewBox="0 0 37 38"><rect x="3" y="3" width="30" height="30" fill="none" stroke="#cdcac4" stroke-width="1.2"/><rect x="0" y="0" width="6" height="6" fill="#e2e0dc" stroke="#cdcac4"/><rect x="0" y="15" width="6" height="6" fill="#e2e0dc" stroke="#cdcac4"/><rect x="0" y="30" width="6" height="6" fill="#e2e0dc" stroke="#cdcac4"/><rect x="15" y="0" width="6" height="6" fill="#e2e0dc" stroke="#cdcac4"/><rect x="15" y="15" width="6" height="6" fill="#e2e0dc" stroke="#cdcac4"/><rect x="15" y="30" width="6" height="6" fill="#e2e0dc" stroke="#cdcac4"/><rect x="30" y="0" width="6" height="6" fill="#e2e0dc" stroke="#cdcac4"/><rect x="30" y="15" width="6" height="6" fill="#e2e0dc" stroke="#cdcac4"/><rect x="30" y="30" width="6" height="6" fill="#e2e0dc" stroke="#cdcac4"/></svg>
<div class="a" style="left:750px;top:378px;width:220px;height:1px;background:#cdc9bf"></div>
<div class="t" style="left:758px;top:389px;">Копии:</div>
<div class="a" style="left:798px;top:385px;width:90px;height:23px;background:#ECE9E2;border:1px solid #bcb8ae;border-right-color:#fff;border-bottom-color:#fff"></div>
<div class="t" style="left:801px;top:390px;color:#a8a59e">1</div>
<div class="a" style="left:871px;top:386px;width:15px;height:21px;background:linear-gradient(90deg,#f0eee9,#fbfaf8)"></div>
<svg style="left:874px;top:390px;" width="10" height="14" viewBox="0 0 10 14"><path d="M1 3.5 L5 0 L9 3.5 V5 L5 2 L1 5 Z" fill="#c8c5be"/><path d="M1 10 L5 13.5 L9 10 V8.5 L5 11.5 L1 8.5 Z" fill="#c8c5be"/></svg>
<div class="a" style="left:750px;top:415px;width:220px;height:1px;background:#cdc9bf"></div>
<div class="a" style="left:885px;top:424px;width:86px;height:21px;background:linear-gradient(#ebe8e2,#e4e1da);border:1px solid #a8a59e;border-radius:4px"></div>
<div class="t" style="left:885px;top:429px;width:86px;text-align:center;color:#9c9993">Применить</div>
<div class="a" style="left:979px;top:136px;width:1px;height:563px;background:#d0ccc2"></div>
<div class="a" style="left:1003px;top:136px;width:1px;height:563px;background:#d6d2c8"></div>
<svg style="left:979px;top:136px;" width="25" height="135" viewBox="0 0 25 135"><defs><linearGradient id="tg"><stop offset="0" stop-color="#eceae4"/><stop offset="0.55" stop-color="#fbfbfa"/><stop offset="1" stop-color="#fff"/></linearGradient></defs><path d="M0 0 L5 4 H19 L22 7 V130 Q22 134 18 134 H0 Z" fill="url(#tg)" stroke="none"/><path d="M0 0.5 L5 4.5 H19 L22 7.5" fill="none" stroke="#d0cdc6"/></svg>
<svg style="left:983px;top:142px;" width="18" height="22" viewBox="0 0 18 22"><path d="M6.2 17.3 A4.3 4.3 0 1 1 10.3 11.7" fill="none" stroke="#4a4a68" stroke-width="1.7"/><path d="M8.2 12.2 L12.8 12.2 L10.5 15.6 Z" fill="#4a4a68"/><path d="M12.5 3 V10 M9 6.5 H16" stroke="#4a4a68" stroke-width="1.2"/><path d="M12.5 1.5 L10.8 3.5 H14.2 Z M12.5 11.5 L10.8 9.5 H14.2 Z M7.5 6.5 L9.5 4.8 V8.2 Z M17.5 6.5 L15.5 4.8 V8.2 Z" fill="#4a4a68"/></svg>
<div class="t" style="left:927px;top:199px;width:130px;height:14px;text-align:center;transform:rotate(90deg);font-size:11px;line-height:14px">Преобразования</div>
<svg style="left:985px;top:257px;" width="11" height="10" viewBox="0 0 11 10"><path d="M1 1 L9.5 9 M9.5 1 L1 9" stroke="#6d7cb4" stroke-width="2"/></svg>
<svg style="left:979px;top:272px;" width="25" height="127" viewBox="0 0 25 127"><path d="M0.5 5.5 Q0.5 2.5 4 2.5 H17 Q20.5 2.5 20.5 6 V121 Q20.5 125.5 17 125.5 H0.5" fill="#eceae4" stroke="#cdcac3"/></svg>
<svg style="left:982px;top:279px;" width="16" height="16" viewBox="0 0 16 16"><path d="M2.5 7 Q3 1.5 8 1.5 Q13 1.5 13.5 7" fill="none" stroke="#4a90e0" stroke-width="1.2" stroke-dasharray="1.2 1"/><rect x="0.5" y="7.5" width="4" height="4" fill="#dde" stroke="#3a3f60"/><rect x="11.5" y="7.5" width="4" height="4" fill="#dde" stroke="#3a3f60"/><path d="M2.5 11.5 V16 M13.5 11.5 V16" stroke="#3a3f60" stroke-width="1.2"/></svg>
<div class="t" style="left:933px;top:338px;width:110px;height:14px;text-align:center;transform:rotate(90deg);font-size:11px;line-height:14px;color:#555">Соединить кривые</div>
<div class="a" style="left:1004px;top:113px;width:1px;height:586px;background:#fff"></div>
<div class="a" style="left:1005px;top:113px;width:19px;height:586px;background:#ECE9E2"></div>
<svg style="left:1009px;top:117px;" width="12" height="3" viewBox="0 0 12 3"><path d="M1 1.5 H2.5 M5 1.5 H6.5 M9 1.5 H10.5" stroke="#888" stroke-width="1.5"/></svg>
<svg style="left:1007px;top:123px;" width="15" height="15" viewBox="0 0 15 15"><circle cx="7.5" cy="7.5" r="6.8" fill="#f0f0f0" stroke="#c8c8c8"/><circle cx="7.5" cy="7.5" r="5.3" fill="#fff"/><path d="M5.5 4.5 L10.5 7.5 L5.5 10.5 Z" fill="#000"/></svg>
<svg style="left:1008px;top:141px;" width="12" height="12" viewBox="0 0 12 12"><path d="M1 11 L6 6" stroke="#c0c0c0" stroke-width="2.2"/><path d="M6 3.5 L8.5 1 L11 3.5 L8.5 6 Z" fill="#bbb"/><path d="M4.8 4.8 L7.2 7.2" stroke="#bbb" stroke-width="1.5"/></svg>
<div class="a" style="left:1006px;top:157px;width:16px;height:16px;background:#f0eee8;border:1px solid #dedad2"></div>
<svg style="left:1009px;top:162px;" width="10" height="6" viewBox="0 0 10 6"><path d="M1 5 L5 1 L9 5" fill="none" stroke="#c8c8c8" stroke-width="1.8"/></svg>
<div class="a" style="left:1005px;top:173px;width:19px;height:18px;background:#fff"></div>
<svg style="left:1007px;top:175px;" width="15" height="15" viewBox="0 0 15 15"><rect x="0.75" y="0.75" width="13.5" height="13.5" fill="#fff" stroke="#000" stroke-width="1.5"/><path d="M1 1 L14 14 M14 1 L1 14" stroke="#000" stroke-width="0.9"/></svg>
<div class="a" style="left:1005px;top:190px;width:18px;height:18px;background:#151918;border:1px solid #4a4a4a"></div>
<div class="a" style="left:1005px;top:207px;width:18px;height:18px;background:#333333;border:1px solid #4a4a4a"></div>
<div class="a" style="left:1005px;top:224px;width:18px;height:18px;background:#4d4d4d;border:1px solid #4a4a4a"></div>
<div class="a" style="left:1005px;top:241px;width:18px;height:18px;background:#666666;border:1px solid #4a4a4a"></div>
<div class="a" style="left:1005px;top:258px;width:18px;height:18px;background:#808080;border:1px solid #4a4a4a"></div>
<div class="a" style="left:1005px;top:275px;width:18px;height:18px;background:#999999;border:1px solid #4a4a4a"></div>
<div class="a" style="left:1005px;top:292px;width:18px;height:18px;background:#b3b3b3;border:1px solid #4a4a4a"></div>
<div class="a" style="left:1005px;top:309px;width:18px;height:18px;background:#cccccc;border:1px solid #4a4a4a"></div>
<div class="a" style="left:1005px;top:326px;width:18px;height:18px;background:#e0e0e0;border:1px solid #4a4a4a"></div>
<div class="a" style="left:1005px;top:343px;width:18px;height:18px;background:#f2f2f2;border:1px solid #4a4a4a"></div>
<div class="a" style="left:1005px;top:360px;width:18px;height:19px;background:#ffffff;border:1px solid #4a4a4a"></div>
<div class="a" style="left:1005px;top:378px;width:18px;height:18px;background:#3a2a96;border:1px solid #4a4a4a"></div>
<div class="a" style="left:1005px;top:395px;width:18px;height:18px;background:#0aa0d8;border:1px solid #4a4a4a"></div>
<div class="a" style="left:1005px;top:412px;width:18px;height:18px;background:#00a050;border:1px solid #4a4a4a"></div>
<div class="a" style="left:1005px;top:429px;width:18px;height:18px;background:#ffe010;border:1px solid #4a4a4a"></div>
<div class="a" style="left:1005px;top:446px;width:18px;height:18px;background:#e02820;border:1px solid #4a4a4a"></div>
<div class="a" style="left:1005px;top:463px;width:18px;height:18px;background:#e0108a;border:1px solid #4a4a4a"></div>
<div class="a" style="left:1005px;top:480px;width:18px;height:18px;background:#a8478f;border:1px solid #4a4a4a"></div>
<div class="a" style="left:1005px;top:497px;width:18px;height:18px;background:#f08000;border:1px solid #4a4a4a"></div>
<div class="a" style="left:1005px;top:514px;width:18px;height:18px;background:#ffb8c0;border:1px solid #4a4a4a"></div>
<div class="a" style="left:1005px;top:531px;width:18px;height:18px;background:#7c6e64;border:1px solid #4a4a4a"></div>
<div class="a" style="left:1005px;top:548px;width:18px;height:18px;background:#d8d4f0;border:1px solid #4a4a4a"></div>
<div class="a" style="left:1005px;top:565px;width:18px;height:18px;background:#b0a4e0;border:1px solid #4a4a4a"></div>
<div class="a" style="left:1005px;top:582px;width:18px;height:18px;background:#7890d0;border:1px solid #4a4a4a"></div>
<div class="a" style="left:1005px;top:599px;width:18px;height:18px;background:#8870c8;border:1px solid #4a4a4a"></div>
<div class="a" style="left:1005px;top:616px;width:18px;height:18px;background:#9088b8;border:1px solid #4a4a4a"></div>
<div class="a" style="left:1005px;top:633px;width:18px;height:18px;background:#506090;border:1px solid #4a4a4a"></div>
<div class="a" style="left:1006px;top:651px;width:16px;height:16px;background:linear-gradient(90deg,#f4f2ee,#e6e3dc);border:1px solid #d8d5ce"></div>
<svg style="left:1009px;top:656px;" width="10" height="6" viewBox="0 0 10 6"><path d="M1 1 L5 5 L9 1" fill="none" stroke="#333" stroke-width="2"/></svg>
<svg style="left:1009px;top:671px;" width="9" height="10" viewBox="0 0 9 10"><path d="M1 0 V10" stroke="#000" stroke-width="2"/><path d="M8.5 0 L2.5 5 L8.5 10 Z" fill="#000"/></svg>
<div class="a" style="left:0px;top:699px;width:1024px;height:1px;background:#fff"></div>
<div class="t" style="left:5px;top:704px;">( 804,129; 56,763 )</div>
<svg style="left:120px;top:705px;" width="6" height="10" viewBox="0 0 6 10"><path d="M0.5 0.5 L5.5 5 L0.5 9.5 Z" fill="#000"/></svg>
<div class="t" style="left:5px;top:725px;letter-spacing:-0.1px">Цветовые профили документа: RGB: sRGB IEC61966-2.1; CMYK: ISO Coated v2 (ECI); Оттенки серого: Dot Gain 15%</div>
<svg style="left:599px;top:726px;" width="6" height="10" viewBox="0 0 6 10"><path d="M0.5 0.5 L5.5 5 L0.5 9.5 Z" fill="#000"/></svg>
<svg style="left:707px;top:704px;" width="14" height="14" viewBox="0 0 14 14"><rect x="0.5" y="0.5" width="13" height="11" rx="1" fill="#e8e8ee" stroke="#5a6090"/><rect x="1.5" y="1.5" width="11" height="3" fill="#e0a0a0"/><rect x="1.5" y="4.5" width="11" height="3" fill="#60b060"/><rect x="1.5" y="7.5" width="11" height="3" fill="#90b0e0"/><rect x="4.5" y="3.5" width="5" height="5" fill="#fff" stroke="#333"/><path d="M4 13.5 H10" stroke="#5a6090"/></svg>
<div class="a" style="left:776px;top:704px;width:1px;height:14px;background:#d0ccc2"></div>
<svg style="left:781px;top:704px;" width="16" height="16" viewBox="0 0 16 16"><path d="M1 7.5 L7 2 L13 7.5 L7 14 Z" fill="#fff" stroke="#4a5078" stroke-width="1.5"/><path d="M2 8.5 H12 L7 13 Z" fill="#f08010"/><path d="M6 2 L4.5 0 M8 2 L9.5 0" stroke="#4a5078"/><path d="M12 7 Q15 7.5 15 11.5" stroke="#f08010" stroke-width="1.5" fill="none"/></svg>
<svg style="left:802px;top:702px;" width="18" height="18" viewBox="0 0 18 18"><rect x="0.5" y="0.5" width="17" height="17" fill="#fff" stroke="#555"/><rect x="1.5" y="1.5" width="15" height="15" fill="none" stroke="#000"/><path d="M1.5 1.5 L16.5 16.5 M16.5 1.5 L1.5 16.5" stroke="#000"/></svg>
<svg style="left:785px;top:725px;" width="9" height="15" viewBox="0 0 9 15"><path d="M4.5 0.5 L1 7 L2.5 11.5 H6.5 L8 7 Z" fill="#fff" stroke="#4a5078" stroke-width="1.1"/><path d="M4.5 4 V9" stroke="#4a5078"/><rect x="0.5" y="12.5" width="8" height="2.5" fill="#2a2f50"/></svg>
<div class="a" style="left:802px;top:723px;width:18px;height:18px;background:#111514;border:1px solid #555"></div>
<svg style="left:999px;top:707px;" width="19" height="19" viewBox="0 0 19 19"><rect x="0.5" y="0.5" width="15" height="15" fill="#e8ecf4" stroke="#b0b0b0"/><circle cx="8" cy="6" r="3.3" fill="#e05020"/><path d="M1.5 15 Q2 10 8 10 Q14 10 14.5 15 Z" fill="#e05020"/><path d="M18.5 13.5 V18.5 H13.5 Z" fill="#000"/></svg>
<div class="a" style="left:0px;top:743px;width:1024px;height:5px;background:#9fb4d8;border-top:1px solid #2f426a"></div>
<div class="a" style="left:684px;top:745px;width:146px;height:3px;background:#3e5580"></div>
<div class="a" style="left:865px;top:745px;width:153px;height:3px;background:#3e5580"></div>
</body></html>
